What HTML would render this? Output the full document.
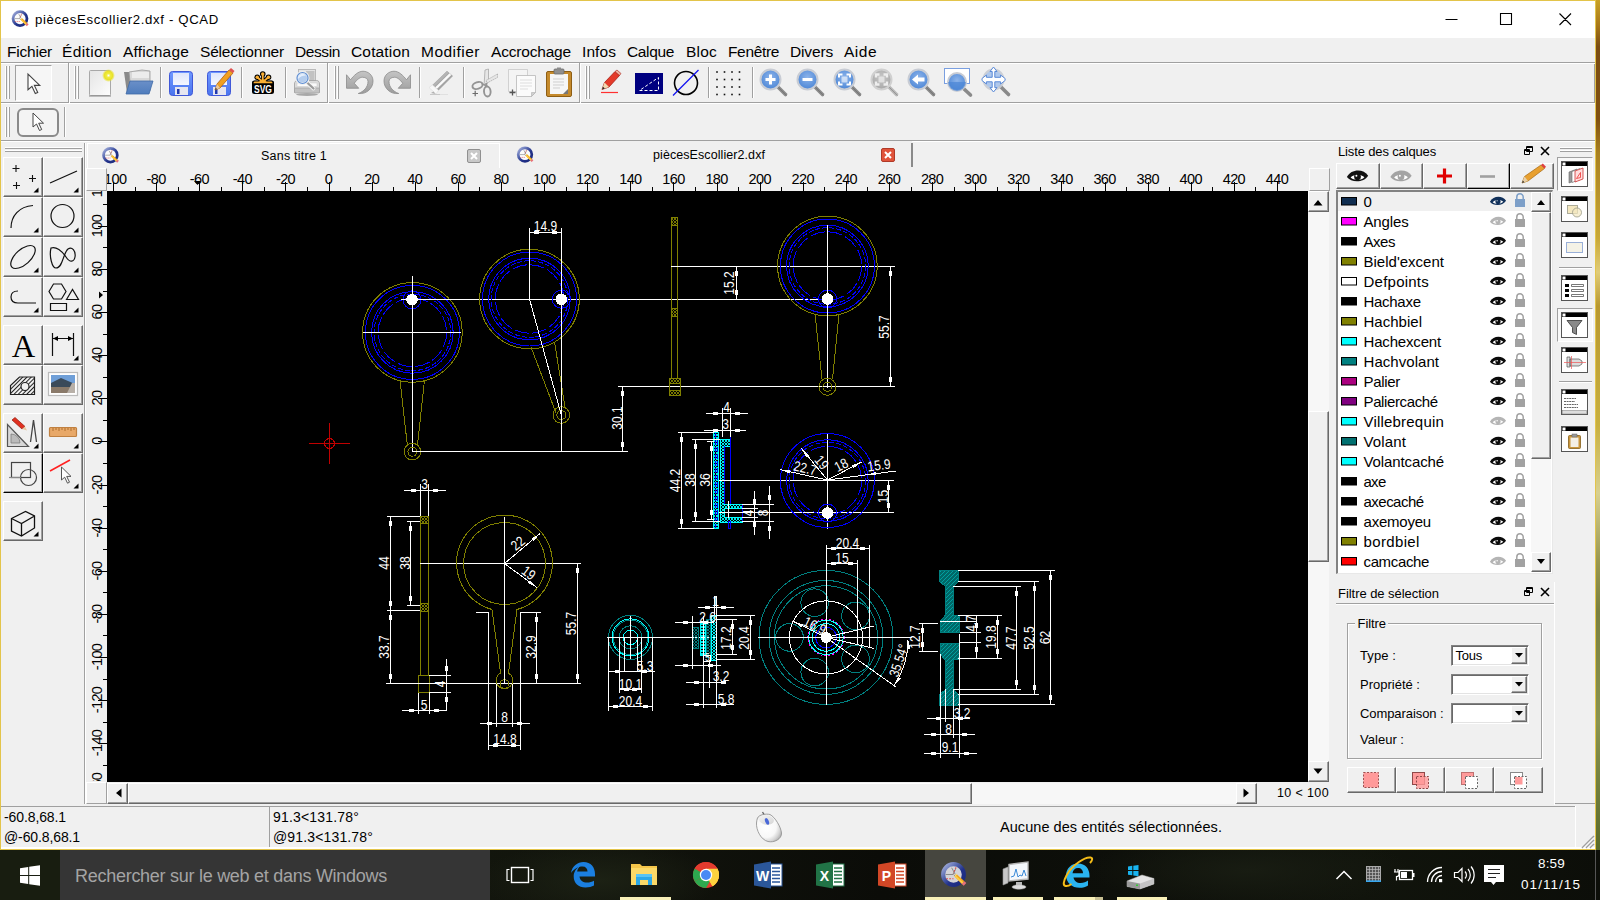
<!DOCTYPE html><html><head><meta charset="utf-8"><title>QCAD</title><style>
html,body{margin:0;padding:0;background:#000;}
#root{position:relative;width:1600px;height:900px;overflow:hidden;background:#f0f0f0;font-family:'Liberation Sans',sans-serif;}
.t{position:absolute;white-space:pre;}
.b{position:absolute;box-sizing:border-box;}
svg{position:absolute;overflow:visible;}
.btn{position:absolute;box-sizing:border-box;background:#f0f0f0;border:1px solid;border-color:#fff #696969 #696969 #fff;box-shadow:inset -1px -1px 0 #a0a0a0;}
</style></head><body><div id="root"><div class="b" style="left:0px;top:0px;width:1600px;height:900px;background:#f0f0f0;"></div><div class="b" style="left:1596px;top:0px;width:4px;height:850px;background:linear-gradient(180deg,#c9a227 0,#a87818 3%,#7b4d12 5.500%,#80500f 14%,#a88020 18%,#c8a838 28%,#e0cc78 32%,#b89830 36%,#c8b040 50%,#d8d090 58%,#9a9850 66%,#7a8040 72%,#8a9450 85%,#5a6a2a 100%);"></div><div class="b" style="left:0px;top:0px;width:1596px;height:850px;border:1px solid #e3c44a;"></div><div class="b" style="left:1px;top:1px;width:1594px;height:37px;background:#fff;"></div><div class="t" style="left:35px;top:11.5px;font-size:13.2px;line-height:16px;color:#000;letter-spacing:0.653px;">piècesEscollier2.dxf - QCAD</div><svg style="left:1440px;top:8px" width="140" height="24"><path d="M5.5 11.5h12M60.5 5.5h11v11h-11zM119.5 5.5l11.5 11.5M131 5.5l-11.5 11.5" stroke="#000" stroke-width="1.1" fill="none"/></svg><div class="t" style="left:7px;top:41.5px;font-size:15.5px;line-height:19px;color:#000;letter-spacing:-0.217px;">Fichier</div><div class="t" style="left:62px;top:41.5px;font-size:15.5px;line-height:19px;color:#000;letter-spacing:0.371px;">Édition</div><div class="t" style="left:123px;top:41.5px;font-size:15.5px;line-height:19px;color:#000;letter-spacing:0.182px;">Affichage</div><div class="t" style="left:200px;top:41.5px;font-size:15.5px;line-height:19px;color:#000;letter-spacing:-0.181px;">Sélectionner</div><div class="t" style="left:295px;top:41.5px;font-size:15.5px;line-height:19px;color:#000;letter-spacing:-0.398px;">Dessin</div><div class="t" style="left:351px;top:41.5px;font-size:15.5px;line-height:19px;color:#000;letter-spacing:0.158px;">Cotation</div><div class="t" style="left:421px;top:41.5px;font-size:15.5px;line-height:19px;color:#000;letter-spacing:0.482px;">Modifier</div><div class="t" style="left:491px;top:41.5px;font-size:15.5px;line-height:19px;color:#000;letter-spacing:-0.186px;">Accrochage</div><div class="t" style="left:582px;top:41.5px;font-size:15.5px;line-height:19px;color:#000;letter-spacing:0.078px;">Infos</div><div class="t" style="left:627px;top:41.5px;font-size:15.5px;line-height:19px;color:#000;letter-spacing:-0.354px;">Calque</div><div class="t" style="left:686px;top:41.5px;font-size:15.5px;line-height:19px;color:#000;letter-spacing:0.211px;">Bloc</div><div class="t" style="left:728px;top:41.5px;font-size:15.5px;line-height:19px;color:#000;letter-spacing:-0.346px;">Fenêtre</div><div class="t" style="left:790px;top:41.5px;font-size:15.5px;line-height:19px;color:#000;letter-spacing:-0.154px;">Divers</div><div class="t" style="left:844px;top:41.5px;font-size:15.5px;line-height:19px;color:#000;letter-spacing:0.492px;">Aide</div><div class="b" style="left:1px;top:62px;width:1594px;height:41px;border-top:1px solid #a0a0a0;border-bottom:1px solid #a0a0a0;border-right:1px solid #a0a0a0;"></div><div class="b" style="left:1px;top:63px;width:1594px;height:1px;background:#fff;"></div><div class="b" style="left:1px;top:103px;width:1594px;height:1px;background:#fff;"></div><div class="b" style="left:1px;top:140px;width:1594px;height:2px;border-top:1px solid #a0a0a0;border-bottom:1px solid #fff;"></div><div class="b" style="left:5px;top:66px;width:2px;height:33px;border-left:1px solid #fff;border-right:1px solid #a0a0a0;"></div><div class="b" style="left:8px;top:66px;width:2px;height:33px;border-left:1px solid #fff;border-right:1px solid #a0a0a0;"></div><div class="b" style="left:74px;top:66px;width:2px;height:33px;border-left:1px solid #fff;border-right:1px solid #a0a0a0;"></div><div class="b" style="left:77px;top:66px;width:2px;height:33px;border-left:1px solid #fff;border-right:1px solid #a0a0a0;"></div><div class="b" style="left:334px;top:66px;width:2px;height:33px;border-left:1px solid #fff;border-right:1px solid #a0a0a0;"></div><div class="b" style="left:337px;top:66px;width:2px;height:33px;border-left:1px solid #fff;border-right:1px solid #a0a0a0;"></div><div class="b" style="left:585px;top:66px;width:2px;height:33px;border-left:1px solid #fff;border-right:1px solid #a0a0a0;"></div><div class="b" style="left:588px;top:66px;width:2px;height:33px;border-left:1px solid #fff;border-right:1px solid #a0a0a0;"></div><div class="b" style="left:68px;top:63px;width:2px;height:40px;border-left:1px solid #a0a0a0;border-right:1px solid #fff;"></div><div class="b" style="left:327px;top:63px;width:2px;height:40px;border-left:1px solid #a0a0a0;border-right:1px solid #fff;"></div><div class="b" style="left:579px;top:63px;width:2px;height:40px;border-left:1px solid #a0a0a0;border-right:1px solid #fff;"></div><div class="b" style="left:160px;top:67px;width:2px;height:31px;border-left:1px solid #a0a0a0;border-right:1px solid #fff;"></div><div class="b" style="left:241px;top:67px;width:2px;height:31px;border-left:1px solid #a0a0a0;border-right:1px solid #fff;"></div><div class="b" style="left:285px;top:67px;width:2px;height:31px;border-left:1px solid #a0a0a0;border-right:1px solid #fff;"></div><div class="b" style="left:419px;top:67px;width:2px;height:31px;border-left:1px solid #a0a0a0;border-right:1px solid #fff;"></div><div class="b" style="left:463px;top:67px;width:2px;height:31px;border-left:1px solid #a0a0a0;border-right:1px solid #fff;"></div><div class="b" style="left:708px;top:67px;width:2px;height:31px;border-left:1px solid #a0a0a0;border-right:1px solid #fff;"></div><div class="b" style="left:752px;top:67px;width:2px;height:31px;border-left:1px solid #a0a0a0;border-right:1px solid #fff;"></div><div class="b" style="left:5px;top:107px;width:2px;height:30px;border-left:1px solid #fff;border-right:1px solid #a0a0a0;"></div><div class="b" style="left:8px;top:107px;width:2px;height:30px;border-left:1px solid #fff;border-right:1px solid #a0a0a0;"></div><div class="b" style="left:64px;top:107px;width:2px;height:30px;border-left:1px solid #a0a0a0;border-right:1px solid #fff;"></div><div class="b" style="left:15px;top:65px;width:37px;height:36px;background:#f6f6f6;border:1px solid;border-color:#a0a0a0 #fff #fff #a0a0a0;"></div><svg style="left:28px;top:74px" width="16" height="22"><g transform="scale(1.12)"><path d="M0 0v14l3.5-3 3 6.5 2.2-1-3-6.3h4.8z" fill="#fff" stroke="#444" stroke-width="1"/></g></svg><div class="b" style="left:17px;top:108px;width:42px;height:29px;border:2px solid #8a8a8a;border-radius:6px;background:#f4f4f4;"></div><svg style="left:33px;top:113px" width="14" height="20"><path d="M0 0v14l3.5-3 3 6.5 2.2-1-3-6.3h4.8z" fill="#fff" stroke="#444" stroke-width="1"/></svg><svg width="0" height="0" style="left:0;top:0"><defs>
<linearGradient id="gpg" x1="0" y1="0" x2="1" y2="1"><stop offset="0" stop-color="#e4e4e4"/><stop offset="1" stop-color="#fdfdfd"/></linearGradient>
<radialGradient id="gyl"><stop offset="0" stop-color="#fff"/><stop offset=".3" stop-color="#f0ec40"/><stop offset=".65" stop-color="#e8e12a"/><stop offset="1" stop-color="#e8e12a" stop-opacity="0"/></radialGradient>
<linearGradient id="gfl" x1="0" y1="0" x2="0" y2="1"><stop offset="0" stop-color="#6a8fc8"/><stop offset="1" stop-color="#4f7dbd"/></linearGradient>
<linearGradient id="gfd" x1="0" y1="0" x2="0" y2="1"><stop offset="0" stop-color="#6f98ff"/><stop offset="1" stop-color="#4a74ee"/></linearGradient>
<linearGradient id="glb" x1="0" y1="0" x2="0" y2="1"><stop offset="0" stop-color="#dfe6fb"/><stop offset="1" stop-color="#f4f6ff"/></linearGradient>
<radialGradient id="glens" cx=".5" cy=".4" r=".6"><stop offset="0" stop-color="#8db4ea"/><stop offset="1" stop-color="#4c86d6"/></radialGradient>
<radialGradient id="glensg" cx=".5" cy=".4" r=".6"><stop offset="0" stop-color="#c8c8c8"/><stop offset="1" stop-color="#a8a8a8"/></radialGradient>
<linearGradient id="ggr" x1="0" y1="0" x2="0" y2="1"><stop offset="0" stop-color="#c4c4c4"/><stop offset="1" stop-color="#9c9c9c"/></linearGradient>
</defs></svg><svg style="left:84px;top:66px" width="32" height="32" viewBox="0 0 32 32"><rect x="5.500" y="4.500" width="21" height="25" rx="1" fill="url(#gpg)" stroke="#a8a8a8"/><path d="M5 30h22" stroke="#888" stroke-width="1"/><circle cx="24.500" cy="9.500" r="6.500" fill="url(#gyl)"/></svg><svg style="left:122px;top:66px" width="32" height="32" viewBox="0 0 32 32"><path d="M2 6l3 21h3V6z" fill="#8a8a8a"/><path d="M7 6l13-2 8 1v20H9z" fill="#d8d8d8" stroke="#999" stroke-width=".8"/><path d="M10 6h17v6H10z" fill="#ececec"/><path d="M8 15h23l-4 13H4z" fill="url(#gfl)" stroke="#3f6aa6" stroke-width=".8"/></svg><svg style="left:165px;top:66px" width="32" height="32" viewBox="0 0 32 32"><rect x="4.500" y="5.500" width="23" height="24" rx="3" fill="url(#gfd)" stroke="#4058d8"/><rect x="8" y="7" width="16" height="12" fill="url(#glb)"/><rect x="10" y="21" width="13" height="8" fill="#e6e6f0"/><rect x="12" y="23" width="2.500" height="5" fill="#2038b0"/></svg><svg style="left:203px;top:66px" width="32" height="32" viewBox="0 0 32 32"><rect x="4.500" y="5.500" width="23" height="24" rx="3" fill="url(#gfd)" stroke="#4058d8"/><rect x="8" y="7" width="16" height="12" fill="url(#glb)"/><rect x="10" y="21" width="13" height="8" fill="#e6e6f0"/><rect x="12" y="23" width="2.500" height="5" fill="#2038b0"/><path d="M12 24l2-6L26 4l4 3L17 22z" fill="#f0a020" stroke="#b06010" stroke-width=".8"/><path d="M26 4l4 3 1.500-2-3.500-3z" fill="#e05050"/><path d="M12 24l2-6 3 4z" fill="#e8c8a0"/><path d="M12 24l.8-2.400 1.200 1.600z" fill="#333"/></svg><svg style="left:246px;top:66px" width="32" height="32" viewBox="0 0 32 32"><g stroke="#000" stroke-width="3.600" stroke-linecap="round"><path d="M16.750 16V8M16.750 16L11.250 11.250M16.750 16L22.500 11.250M16.750 16.500H8M16.750 16.500H26"/></g><circle cx="16.750" cy="8" r="2.800" fill="#000"/><circle cx="11.250" cy="11.250" r="2.800" fill="#000"/><circle cx="22.500" cy="11.250" r="2.800" fill="#000"/><rect x="6" y="14.500" width="22" height="13.500" rx="2.500" fill="#000"/><g stroke="#fbb034" stroke-width="1.800" stroke-linecap="round"><path d="M16.750 16V8M16.750 16L11.250 11.250M16.750 16L22.500 11.250"/></g><circle cx="16.750" cy="8" r="1.700" fill="#fbb034"/><circle cx="11.250" cy="11.250" r="1.700" fill="#fbb034"/><circle cx="22.500" cy="11.250" r="1.700" fill="#fbb034"/><path d="M7.500 17.200c0-1.200.6-1.700 1.700-1.700h15.600c1.100 0 1.700.5 1.700 1.700z" fill="#fbb034"/><path d="M12 16.500l4.750-3.500 4.750 3.500z" fill="#fbb034"/><text x="17" y="26.800" font-family="'Liberation Sans',sans-serif" font-weight="700" font-size="11" fill="#fff" text-anchor="middle" textLength="18" lengthAdjust="spacingAndGlyphs">SVG</text></svg><svg style="left:291px;top:66px" width="32" height="32" viewBox="0 0 32 32"><rect x="7.500" y="3.500" width="17" height="13" fill="#e4e4e4" stroke="#b4b4b4" stroke-width=".9"/><rect x="15" y="5" width="8.500" height="10" fill="#c2c2c2"/><path d="M3.500 18c0-2 1-3.500 3-3.500h19c2 0 3 1.500 3 3.500v8.500h-25z" fill="#dcdcdc" stroke="#a4a4a4" stroke-width=".9"/><rect x="6" y="17" width="20" height="3.500" fill="#fafafa" stroke="#c8c8c8" stroke-width=".5"/><rect x="3.500" y="22" width="25" height="5" rx="1" fill="#c2c2c2" stroke="#a0a0a0" stroke-width=".7"/><ellipse cx="16" cy="28.500" rx="11" ry="1.500" fill="#a8a8a8"/><path d="M15.500 16l7 6.500" stroke="#f4f4f4" stroke-width="3.800" stroke-linecap="round"/><path d="M15.500 16l7 6.500" stroke="#9a9a9a" stroke-width="2.200" stroke-linecap="round"/><circle cx="11.500" cy="12" r="5.800" fill="#b4cdee" stroke="#f0f0f0" stroke-width="2.400"/><circle cx="11.500" cy="12" r="5.500" fill="none" stroke="#5f8fd4" stroke-width="1.200"/><path d="M7 13a4.500 4.500 0 0 1 8-3.500c-3 0-6 1-8 3.500z" fill="#e4eefc"/></svg><svg style="left:344px;top:66px" width="32" height="32" viewBox="0 0 32 32"><path d="M2.500 8.750V22.250H14.750L10.250 17.250C13 13.500 16 11.250 18.500 11.250C22 11.250 24 13 24 15.500C24 21 20 25.500 14.250 27.500C23 28.500 29 22 29 15C29 9 24 5.250 19 5.250C14 5.250 10 9.500 6.500 13.750Z" fill="url(#ggr)" stroke="#8c8c8c" stroke-width=".8"/></svg><svg style="left:381px;top:66px" width="32" height="32" viewBox="0 0 32 32"><g transform="translate(32,0) scale(-1,1)"><path d="M2.500 8.750V22.250H14.750L10.250 17.250C13 13.500 16 11.250 18.500 11.250C22 11.250 24 13 24 15.500C24 21 20 25.500 14.250 27.500C23 28.500 29 22 29 15C29 9 24 5.250 19 5.250C14 5.250 10 9.500 6.500 13.750Z" fill="url(#ggr)" stroke="#8c8c8c" stroke-width=".8"/></g></svg><svg style="left:425px;top:66px" width="32" height="32" viewBox="0 0 32 32"><path d="M7.500 19L22 5l6 5L13.500 24.500z" fill="#a4a4a4"/><path d="M10 21.500L24.500 7.300l1.800 1.600L11.800 23z" fill="#fafafa"/><path d="M7.500 19L22 5l2 1.700L9.300 20.700z" fill="#b4b4b4"/><path d="M7.500 19l6 5.500L11 28l-7-6.500z" fill="#f8f8f8" stroke="#dcdcdc" stroke-width=".6"/><path d="M6 27l2.500-1.500 2 2.500z" fill="#b0b0b0"/><path d="M5 28.500h10" stroke="#c8c8c8" stroke-width="1"/><path d="M15 28.500h8" stroke="#e0e0e0" stroke-width="1"/></svg><svg style="left:468px;top:66px" width="32" height="32" viewBox="0 0 32 32"><path d="M17 4l3.500-1v13l-2.800 3.500-1.500-2z" fill="#e6e6e6" stroke="#a8a8a8" stroke-width=".8"/><path d="M29.500 8v3.500L19 17l-1-2.500z" fill="#e6e6e6" stroke="#a8a8a8" stroke-width=".8" stroke-dasharray="1.500 .8"/><ellipse cx="9.500" cy="19.500" rx="5.200" ry="3.200" transform="rotate(-18 9.500 19.500)" fill="none" stroke="#949494" stroke-width="1.900"/><ellipse cx="19.300" cy="25.500" rx="3.300" ry="5" transform="rotate(-5 19.300 25.500)" fill="none" stroke="#949494" stroke-width="1.900"/><path d="M14 18l4 1.500M18 17l1 4" stroke="#949494" stroke-width="1.800"/><path d="M4.500 27.500h5.500M7.200 24.800v5.500" stroke="#6c6c6c" stroke-width="1.200"/></svg><svg style="left:506px;top:66px" width="32" height="32" viewBox="0 0 32 32"><path d="M2.500 3.500h19v22h-19z" fill="#f4f4f4" stroke="#c8c8c8" stroke-width=".8"/><path d="M10.500 9.500h19v17l-4 4h-15z" fill="#fbfbfb" stroke="#b8b8b8" stroke-width=".8"/><path d="M25.500 30.500v-4h4z" fill="#d0d0d0" stroke="#b0b0b0" stroke-width=".6"/><path d="M14 14h12M14 17h12M14 20h12M14 23h8" stroke="#ddd" stroke-width="1"/><path d="M3.500 26.500h6M6.500 23.500v6" stroke="#555" stroke-width="1.300"/></svg><svg style="left:543px;top:66px" width="32" height="32" viewBox="0 0 32 32"><rect x="3.500" y="5.500" width="25" height="25" rx="1.500" fill="#c58a2c" stroke="#8e5e14"/><path d="M7 8h18v20H7z" fill="#f6f6f6"/><path d="M10 13h11M10 16h11M10 19h11M10 22h7" stroke="#cfcfcf" stroke-width="1"/><path d="M20 28l5-5v5z" fill="#777"/><rect x="11" y="3" width="10" height="5" rx="1" fill="#909090" stroke="#6a6a6a" stroke-width=".8"/><rect x="14" y="1.500" width="4" height="3" fill="#8a8a8a"/></svg><svg style="left:596px;top:66px" width="32" height="32" viewBox="0 0 32 32"><path d="M6 23.500l2.500-7L19 5.500l4.500 4L13 21z" fill="#e43a2a" stroke="#a82016" stroke-width=".8"/><path d="M19 5.500l4.500 4 1.500-2-4-3.500z" fill="#f0b0a0" stroke="#a82016" stroke-width=".6"/><path d="M6 23.500l2.500-7L13 21z" fill="#f0d8b0"/><path d="M6 23.500l1-2.800 1.800 1.700z" fill="#222"/><path d="M5 26.500h17" stroke="#ff3030" stroke-width="1.200"/></svg><svg style="left:633px;top:66px" width="32" height="32" viewBox="0 0 32 32"><rect x="2" y="7" width="28" height="21" fill="#000080"/><path d="M6.500 24.500h19v-13z" fill="none" stroke="#fff" stroke-width="1" stroke-dasharray="3 2"/></svg><svg style="left:669px;top:66px" width="32" height="32" viewBox="0 0 32 32"><circle cx="17" cy="17" r="11.500" fill="none" stroke="#000" stroke-width="1.600"/><path d="M4 29.500L29.500 4" stroke="#1010f0" stroke-width="1.300"/></svg><svg style="left:714px;top:66px" width="32" height="32" viewBox="0 0 32 32"><g fill="#111"><rect x="2.2" y="5.2" width="1.600" height="1.600"/><rect x="2.2" y="12.7" width="1.600" height="1.600"/><rect x="2.2" y="20.2" width="1.600" height="1.600"/><rect x="2.2" y="27.7" width="1.600" height="1.600"/><rect x="9.7" y="5.2" width="1.600" height="1.600"/><rect x="9.7" y="12.7" width="1.600" height="1.600"/><rect x="9.7" y="20.2" width="1.600" height="1.600"/><rect x="9.7" y="27.7" width="1.600" height="1.600"/><rect x="17.2" y="5.2" width="1.600" height="1.600"/><rect x="17.2" y="12.7" width="1.600" height="1.600"/><rect x="17.2" y="20.2" width="1.600" height="1.600"/><rect x="17.2" y="27.7" width="1.600" height="1.600"/><rect x="24.7" y="5.2" width="1.600" height="1.600"/><rect x="24.7" y="12.7" width="1.600" height="1.600"/><rect x="24.7" y="20.2" width="1.600" height="1.600"/><rect x="24.7" y="27.7" width="1.600" height="1.600"/></g></svg><svg style="left:756px;top:66px" width="32" height="32" viewBox="0 0 32 32"><path d="M21.500 20.500l8 8" stroke="#8a8a8a" stroke-width="3.600" stroke-linecap="round"/><path d="M21.500 20.500l8 8" stroke="#555" stroke-width="1" stroke-linecap="round" opacity=".35" transform="translate(.8,.8)"/><circle cx="14.5" cy="13.5" r="10" fill="url(#glens)" stroke="#c8ccd4" stroke-width="2"/><path d="M9.500 13.500h10M14.500 8.500v10" stroke="#fff" stroke-width="3"/></svg><svg style="left:793px;top:66px" width="32" height="32" viewBox="0 0 32 32"><path d="M21.500 20.500l8 8" stroke="#8a8a8a" stroke-width="3.600" stroke-linecap="round"/><path d="M21.500 20.500l8 8" stroke="#555" stroke-width="1" stroke-linecap="round" opacity=".35" transform="translate(.8,.8)"/><circle cx="14.5" cy="13.5" r="10" fill="url(#glens)" stroke="#c8ccd4" stroke-width="2"/><path d="M9.500 13.500h10" stroke="#fff" stroke-width="3"/></svg><svg style="left:830px;top:66px" width="32" height="32" viewBox="0 0 32 32"><path d="M21.500 20.500l8 8" stroke="#8a8a8a" stroke-width="3.600" stroke-linecap="round"/><path d="M21.500 20.500l8 8" stroke="#555" stroke-width="1" stroke-linecap="round" opacity=".35" transform="translate(.8,.8)"/><circle cx="14.5" cy="13.5" r="10" fill="url(#glens)" stroke="#c8ccd4" stroke-width="2"/><path d="M9 11.500V8.500h3.500M16.500 8.500H20v3M20 15.500v3h-3.500M12.500 18.500H9v-3" stroke="#fff" stroke-width="2" fill="none"/><rect x="11.500" y="10.500" width="6" height="6" fill="#fff" opacity=".6"/></svg><svg style="left:867px;top:66px" width="32" height="32" viewBox="0 0 32 32"><path d="M21.500 20.500l8 8" stroke="#b8b8b8" stroke-width="3.600" stroke-linecap="round"/><path d="M21.500 20.500l8 8" stroke="#555" stroke-width="1" stroke-linecap="round" opacity=".35" transform="translate(.8,.8)"/><circle cx="14.5" cy="13.5" r="10" fill="url(#glensg)" stroke="#d0d0d0" stroke-width="2"/><path d="M9 11.500V8.500h3.500M16.500 8.500H20v3M20 15.500v3h-3.500M12.500 18.500H9v-3" stroke="#eee" stroke-width="2.400" fill="none"/><rect x="11.500" y="10.500" width="6" height="6" fill="#e8e8e8" opacity=".8"/></svg><svg style="left:904px;top:66px" width="32" height="32" viewBox="0 0 32 32"><path d="M21.500 20.500l8 8" stroke="#8a8a8a" stroke-width="3.600" stroke-linecap="round"/><path d="M21.500 20.500l8 8" stroke="#555" stroke-width="1" stroke-linecap="round" opacity=".35" transform="translate(.8,.8)"/><circle cx="14.5" cy="13.5" r="10" fill="url(#glens)" stroke="#c8ccd4" stroke-width="2"/><path d="M8 13.500l6-5v3h6.500v4H14v3z" fill="#fff"/></svg><svg style="left:941px;top:66px" width="32" height="32" viewBox="0 0 32 32"><rect x="3.500" y="2.500" width="25" height="15" fill="#fff" stroke="#7a9fe0" stroke-width="1"/><path d="M22 22l7.500 7" stroke="#8a8a8a" stroke-width="3.600" stroke-linecap="round"/><circle cx="16" cy="16" r="9" fill="url(#glens)" stroke="#c8ccd4" stroke-width="2"/><path d="M7 16a9 9 0 0 0 18 0z" fill="#4c86d6" opacity=".7"/></svg><svg style="left:979px;top:66px" width="32" height="32" viewBox="0 0 32 32"><path d="M21.500 20.500l8 8" stroke="#8a8a8a" stroke-width="3.600" stroke-linecap="round"/><circle cx="14.500" cy="13.500" r="10" fill="#a9c4ec" stroke="#c8ccd4" stroke-width="2" opacity=".9"/><path d="M14.500 1l3.500 4.500h-2.200v5.800h5.800V9l4.500 3.500v2L21.600 18v-2.200h-5.800v5.800H18L14.500 26 11 21.600h2.200v-5.800H7.400V18L3 14.500v-2L7.400 9v2.300h5.800V5.500H11z" fill="#fff" stroke="#5a8ad8" stroke-width="1"/></svg><div class="b" style="left:84px;top:143px;width:2px;height:661px;border-left:1px solid #a0a0a0;border-right:1px solid #fff;"></div><div class="b" style="left:5px;top:147px;width:77px;height:2px;border-top:1px solid #fff;border-bottom:1px solid #a0a0a0;"></div><div class="b" style="left:5px;top:150px;width:77px;height:2px;border-top:1px solid #fff;border-bottom:1px solid #a0a0a0;"></div><div class="btn" style="left:3px;top:157px;width:40px;height:40px;"></div><div class="btn" style="left:43px;top:157px;width:40px;height:40px"></div><div class="btn" style="left:3px;top:197px;width:40px;height:40px;"></div><div class="btn" style="left:43px;top:197px;width:40px;height:40px"></div><div class="btn" style="left:3px;top:237px;width:40px;height:40px;"></div><div class="btn" style="left:43px;top:237px;width:40px;height:40px"></div><div class="btn" style="left:3px;top:277px;width:40px;height:40px;"></div><div class="btn" style="left:43px;top:277px;width:40px;height:40px"></div><div class="btn" style="left:3px;top:325px;width:40px;height:40px;"></div><div class="btn" style="left:43px;top:325px;width:40px;height:40px"></div><div class="btn" style="left:3px;top:365px;width:40px;height:40px;"></div><div class="btn" style="left:43px;top:365px;width:40px;height:40px"></div><div class="btn" style="left:3px;top:413px;width:40px;height:40px;"></div><div class="btn" style="left:43px;top:413px;width:40px;height:40px"></div><div class="btn" style="left:3px;top:453px;width:40px;height:40px;border-color:#fff #000 #000 #fff;"></div><div class="btn" style="left:43px;top:453px;width:40px;height:40px"></div><div class="btn" style="left:3px;top:501px;width:40px;height:40px;"></div><svg style="left:3px;top:157px" width="40" height="40" fill="none" stroke="#111" stroke-width="1.200"><path d="M9.500 11.500h7M13 8v7M26 21.500h7M29.500 18v7M10 28.500h7M13.500 25v7" stroke-width="1.100"/><path stroke="none" d="M35.500 30.500v5h-5z" fill="#000"/></svg><svg style="left:43px;top:157px" width="40" height="40" fill="none" stroke="#111" stroke-width="1.200"><path d="M7 26L34 14"/><path stroke="none" d="M35.500 30.500v5h-5z" fill="#000"/></svg><svg style="left:3px;top:197px" width="40" height="40" fill="none" stroke="#111" stroke-width="1.200"><path d="M8 31C8 19 16 9.500 30 8.500"/><path stroke="none" d="M35.500 30.500v5h-5z" fill="#000"/></svg><svg style="left:43px;top:197px" width="40" height="40" fill="none" stroke="#111" stroke-width="1.200"><circle cx="19.500" cy="19" r="11.500"/><path stroke="none" d="M35.500 30.500v5h-5z" fill="#000"/></svg><svg style="left:3px;top:237px" width="40" height="40" fill="none" stroke="#111" stroke-width="1.200"><ellipse cx="20" cy="20" rx="15" ry="7.500" transform="rotate(-42 20 20)"/><path stroke="none" d="M35.500 30.500v5h-5z" fill="#000"/></svg><svg style="left:43px;top:237px" width="40" height="40" fill="none" stroke="#111" stroke-width="1.200"><path d="M8 11c5-2 11 3 15 9 4 6 8 5 9 0 1-6-3-11-7-8-5 4-5 19-12 19-4 0-7-12-5-20z"/><path stroke="none" d="M35.500 30.500v5h-5z" fill="#000"/></svg><svg style="left:3px;top:277px" width="40" height="40" fill="none" stroke="#111" stroke-width="1.200"><path d="M33 26H15c-4 0-7-2-7-6s3-6 7-6"/><path stroke="none" d="M35.500 30.500v5h-5z" fill="#000"/></svg><svg style="left:43px;top:277px" width="40" height="40" fill="none" stroke="#111" stroke-width="1.200"><path d="M6 14.500l4.500-7.500h8l4.500 7.500-4.500 7.500h-8zM23.500 22.500l6-10 6 10zM7.500 26.500h16v7h-16z"/><path stroke="none" d="M35.500 30.500v5h-5z" fill="#000"/></svg><svg style="left:3px;top:325px" width="40" height="40" fill="none" stroke="#111" stroke-width="1.200"><text x="20.500" y="31.700" font-family="'Liberation Serif',serif" font-size="32.500" fill="#000" stroke="none" text-anchor="middle">A</text></svg><svg style="left:43px;top:325px" width="40" height="40" fill="none" stroke="#111" stroke-width="1.200"><path d="M9.500 8v23M30.500 8v23M10 13.500h20"/><path d="M10 13.500l5-2.500v5zM30 13.500l-5-2.500v5z" fill="#000" stroke="none"/><path stroke="none" d="M35.500 30.500v5h-5z" fill="#000"/></svg><svg style="left:3px;top:365px" width="40" height="40" fill="none" stroke="#111" stroke-width="1.200"><defs><pattern id="lh" width="3" height="3" patternUnits="userSpaceOnUse" patternTransform="rotate(45)"><path d="M1.500 0v3" stroke="#222" stroke-width="1"/></pattern></defs><path d="M7.500 29.500v-9l9-8.500h15v17.500z" fill="url(#lh)" stroke="#222"/><circle cx="22" cy="21.500" r="4" fill="#f0f0f0" stroke="#222"/></svg><svg style="left:43px;top:365px" width="40" height="40" fill="none" stroke="#111" stroke-width="1.200"><rect x="5.500" y="7.500" width="29" height="23" fill="#fff" stroke="#bbb"/><rect x="8" y="10" width="24" height="8" fill="#6f9fd8" stroke="none"/><rect x="8" y="18" width="24" height="10" fill="#8a7a6a" stroke="none"/><path d="M8 18l10-5 14 6v3H8z" fill="#3a4a5a" stroke="none"/><path d="M24 28l5-10h3v10z" fill="#b8b0a8" stroke="none"/></svg><svg style="left:3px;top:413px" width="40" height="40" fill="none" stroke="#111" stroke-width="1.200"><path d="M4.500 33.500v-22l21 22z" fill="#d8d8d8" stroke="#555"/><path d="M8 30v-9a9 9 0 0 1 9 9z" fill="#bbb" stroke="#777" stroke-width=".7"/><path d="M9 7l3-2.500 10 9-3 2.500z" fill="#e03020" stroke="#901808" stroke-width=".7"/><path d="M22 13.500l2 4-5-1.500z" fill="#e8c8a0" stroke="none"/><path d="M30.500 7l-3 22M30.500 7l3 22" stroke="#444" stroke-width="1.300"/><path stroke="none" d="M35.500 30.500v5h-5z" fill="#000"/></svg><svg style="left:43px;top:413px" width="40" height="40" fill="none" stroke="#111" stroke-width="1.200"><rect x="6.500" y="14.500" width="27" height="9" rx="1" fill="#e8a868" stroke="#c08040"/><path d="M10 15v3M13 15v2M16 15v3M19 15v2M22 15v3M25 15v2M28 15v3M31 15v2" stroke="#a06020" stroke-width=".8"/><path stroke="none" d="M35.500 30.500v5h-5z" fill="#000"/></svg><svg style="left:3px;top:453px" width="40" height="40" fill="none" stroke="#111" stroke-width="1.200"><rect x="8.500" y="9.500" width="19" height="15" stroke="#444"/><circle cx="25.500" cy="24.500" r="8" stroke="#444"/><path d="M6 24.500h12" stroke="#888"/></svg><svg style="left:43px;top:453px" width="40" height="40" fill="none" stroke="#111" stroke-width="1.200"><path d="M7 18L27 7" stroke="#ff2020" stroke-width="1.500"/><path d="M18.500 14v13l3.200-2.800 2.800 6 2-1-2.800-5.800h4.300z" fill="#fff" stroke="#555" stroke-width="1"/><path stroke="none" d="M35.500 30.500v5h-5z" fill="#000"/></svg><svg style="left:3px;top:501px" width="40" height="40" fill="none" stroke="#111" stroke-width="1.200"><path d="M8.500 17.500l14-7 9 4.500v12l-13 8-10-5zM8.500 17.500l10 5 13-7.500M18.500 22.500v12.500" stroke-width="1.300"/><path stroke="none" d="M35.500 30.500v5h-5z" fill="#000"/></svg><div class="b" style="left:87px;top:143px;width:413px;height:25px;background:#f0f0f0;border:1px solid #fff;border-bottom:none;"></div><div class="b" style="left:500px;top:141px;width:412px;height:27px;background:#f0f0f0;"></div><div class="b" style="left:911px;top:143px;width:2px;height:24px;background:#8a8a8a;"></div><div class="t" style="left:261px;top:149.0px;font-size:12.5px;line-height:15px;color:#000;letter-spacing:0.230px;">Sans titre 1</div><div class="t" style="left:653px;top:148.0px;font-size:12.5px;line-height:15px;color:#000;letter-spacing:0.077px;">piècesEscollier2.dxf</div><div class="b" style="left:467px;top:149px;width:14px;height:14px;background:#c8c8c8;border:1px solid #909090;border-radius:2px;"></div><svg style="left:470px;top:152px" width="8" height="8"><path d="M1 1l6 6M7 1l-6 6" stroke="#fff" stroke-width="2"/></svg><div class="b" style="left:881px;top:148px;width:14px;height:14px;background:#e0533a;border:1px solid #b03a28;border-radius:2px;"></div><svg style="left:884px;top:151px" width="8" height="8"><path d="M1 1l6 6M7 1l-6 6" stroke="#fff" stroke-width="2"/></svg><svg style="left:0;top:0" width="1600" height="900"><defs><linearGradient id="gq" x1="0" y1="0" x2="1" y2="1"><stop offset="0" stop-color="#aab4de"/><stop offset=".35" stop-color="#5466ae"/><stop offset=".6" stop-color="#22328a"/><stop offset="1" stop-color="#1c2a7a"/></linearGradient></defs><g transform="translate(20,18.6) scale(0.82)"><circle cx="0" cy="0" r="8.500" fill="#fbfbfb" stroke="url(#gq)" stroke-width="3.400"/><path d="M-6.500 0h6.500M-1.500 -5.500l3 5.500M2 -5l-2.500 5" stroke="#888" stroke-width=".8"/><path d="M-6 3.500h6M2 -6l-2 5" stroke="#e04848" stroke-width=".8" stroke-dasharray="1.500 1"/><g transform="translate(.5 1.200) scale(.82 .84) translate(-.5 -1.200)"><path d="M.5 1.200l2.200-2.200 8 7.300-2.600 2.700z" fill="#f5a81c"/><path d="M.5 1.200l2.200-2.200 .8.700-2.400 2.300z" fill="#f6e08a"/><path d="M1.300 1.900l1.100-1 7.600 7-1 1.100z" fill="#fbd24a"/><path d="M8.100 9l2.600-2.700 2 1.800-2.600 2.700z" fill="#e8707a"/><path d="M.5 1.200l.9-.9-.1 1z" fill="#444"/></g></g><g transform="translate(110.4,155.2) scale(0.81)"><circle cx="0" cy="0" r="8.500" fill="#fbfbfb" stroke="url(#gq)" stroke-width="3.400"/><path d="M-6.500 0h6.500M-1.500 -5.500l3 5.500M2 -5l-2.500 5" stroke="#888" stroke-width=".8"/><path d="M-6 3.500h6M2 -6l-2 5" stroke="#e04848" stroke-width=".8" stroke-dasharray="1.500 1"/><g transform="translate(.5 1.200) scale(.82 .84) translate(-.5 -1.200)"><path d="M.5 1.200l2.200-2.200 8 7.300-2.600 2.700z" fill="#f5a81c"/><path d="M.5 1.200l2.200-2.200 .8.700-2.400 2.300z" fill="#f6e08a"/><path d="M1.300 1.900l1.100-1 7.600 7-1 1.100z" fill="#fbd24a"/><path d="M8.100 9l2.600-2.700 2 1.800-2.600 2.700z" fill="#e8707a"/><path d="M.5 1.200l.9-.9-.1 1z" fill="#444"/></g></g><g transform="translate(525,154.6) scale(0.8)"><circle cx="0" cy="0" r="8.500" fill="#fbfbfb" stroke="url(#gq)" stroke-width="3.400"/><path d="M-6.500 0h6.500M-1.500 -5.500l3 5.500M2 -5l-2.500 5" stroke="#888" stroke-width=".8"/><path d="M-6 3.500h6M2 -6l-2 5" stroke="#e04848" stroke-width=".8" stroke-dasharray="1.500 1"/><g transform="translate(.5 1.200) scale(.82 .84) translate(-.5 -1.200)"><path d="M.5 1.200l2.200-2.200 8 7.300-2.600 2.700z" fill="#f5a81c"/><path d="M.5 1.200l2.200-2.200 .8.700-2.400 2.300z" fill="#f6e08a"/><path d="M1.300 1.900l1.100-1 7.600 7-1 1.100z" fill="#fbd24a"/><path d="M8.100 9l2.600-2.700 2 1.800-2.600 2.700z" fill="#e8707a"/><path d="M.5 1.200l.9-.9-.1 1z" fill="#444"/></g></g></svg><div class="b" style="left:86px;top:168px;width:1244px;height:23px;background:#f0f0f0;"></div><div class="b" style="left:86px;top:168px;width:21px;height:23px;border:1px solid;border-color:#fff #a0a0a0 #a0a0a0 #fff;"></div><div class="b" style="left:1309px;top:168px;width:21px;height:23px;border:1px solid;border-color:#fff #a0a0a0 #a0a0a0 #fff;"></div><svg style="left:0;top:0" width="1600" height="900"><path d="M113.5 182v9 M135.5 187v4 M156.5 182v9 M178.5 187v4 M199.5 182v9 M221.5 187v4 M242.5 182v9 M264.5 187v4 M285.5 182v9 M307.5 187v4 M329.5 182v9 M350.5 187v4 M372.5 182v9 M393.5 187v4 M415.5 182v9 M436.5 187v4 M458.5 182v9 M479.5 187v4 M501.5 182v9 M523.5 187v4 M544.5 182v9 M566.5 187v4 M587.5 182v9 M609.5 187v4 M630.5 182v9 M652.5 187v4 M673.5 182v9 M695.5 187v4 M717.5 182v9 M738.5 187v4 M760.5 182v9 M781.5 187v4 M803.5 182v9 M824.5 187v4 M846.5 182v9 M867.5 187v4 M889.5 182v9 M911.5 187v4 M932.5 182v9 M954.5 187v4 M975.5 182v9 M997.5 187v4 M1018.5 182v9 M1040.5 187v4 M1061.5 182v9 M1083.5 187v4 M1105.5 182v9 M1126.5 187v4 M1148.5 182v9 M1169.5 187v4 M1191.5 182v9 M1212.5 187v4 M1234.5 182v9 M1255.5 187v4 M1277.5 182v9 M103 204.5h4 M98 226.5h9 M103 247.5h4 M98 269.5h9 M103 291.5h4 M98 312.5h9 M103 334.5h4 M98 355.5h9 M103 377.5h4 M98 398.5h9 M103 420.5h4 M98 441.5h9 M103 463.5h4 M98 485.5h9 M103 506.5h4 M98 528.5h9 M103 549.5h4 M98 571.5h9 M103 592.5h4 M98 614.5h9 M103 635.5h4 M98 657.5h9 M103 679.5h4 M98 700.5h9 M103 722.5h4 M98 743.5h9 M103 765.5h4" stroke="#000" stroke-width="1" fill="none"/><path d="M194 181h7l-3.500 4zM99 291.500v7l4-3.500z" fill="#000"/></svg><div class="b" style="left:107px;top:168px;width:1200px;height:23px;overflow:hidden"><div class="t" style="left:-23.9px;width:60px;text-align:center;top:2px;font-size:14.5px;line-height:18px;letter-spacing:-0.6px">-100</div><div class="t" style="left:19.2px;width:60px;text-align:center;top:2px;font-size:14.5px;line-height:18px;letter-spacing:-0.6px">-80</div><div class="t" style="left:62.3px;width:60px;text-align:center;top:2px;font-size:14.5px;line-height:18px;letter-spacing:-0.6px">-60</div><div class="t" style="left:105.4px;width:60px;text-align:center;top:2px;font-size:14.5px;line-height:18px;letter-spacing:-0.6px">-40</div><div class="t" style="left:148.5px;width:60px;text-align:center;top:2px;font-size:14.5px;line-height:18px;letter-spacing:-0.6px">-20</div><div class="t" style="left:191.6px;width:60px;text-align:center;top:2px;font-size:14.5px;line-height:18px;letter-spacing:-0.6px">0</div><div class="t" style="left:234.7px;width:60px;text-align:center;top:2px;font-size:14.5px;line-height:18px;letter-spacing:-0.6px">20</div><div class="t" style="left:277.8px;width:60px;text-align:center;top:2px;font-size:14.5px;line-height:18px;letter-spacing:-0.6px">40</div><div class="t" style="left:320.9px;width:60px;text-align:center;top:2px;font-size:14.5px;line-height:18px;letter-spacing:-0.6px">60</div><div class="t" style="left:364.0px;width:60px;text-align:center;top:2px;font-size:14.5px;line-height:18px;letter-spacing:-0.6px">80</div><div class="t" style="left:407.2px;width:60px;text-align:center;top:2px;font-size:14.5px;line-height:18px;letter-spacing:-0.6px">100</div><div class="t" style="left:450.3px;width:60px;text-align:center;top:2px;font-size:14.5px;line-height:18px;letter-spacing:-0.6px">120</div><div class="t" style="left:493.4px;width:60px;text-align:center;top:2px;font-size:14.5px;line-height:18px;letter-spacing:-0.6px">140</div><div class="t" style="left:536.5px;width:60px;text-align:center;top:2px;font-size:14.5px;line-height:18px;letter-spacing:-0.6px">160</div><div class="t" style="left:579.6px;width:60px;text-align:center;top:2px;font-size:14.5px;line-height:18px;letter-spacing:-0.6px">180</div><div class="t" style="left:622.7px;width:60px;text-align:center;top:2px;font-size:14.5px;line-height:18px;letter-spacing:-0.6px">200</div><div class="t" style="left:665.8px;width:60px;text-align:center;top:2px;font-size:14.5px;line-height:18px;letter-spacing:-0.6px">220</div><div class="t" style="left:708.9px;width:60px;text-align:center;top:2px;font-size:14.5px;line-height:18px;letter-spacing:-0.6px">240</div><div class="t" style="left:752.0px;width:60px;text-align:center;top:2px;font-size:14.5px;line-height:18px;letter-spacing:-0.6px">260</div><div class="t" style="left:795.1px;width:60px;text-align:center;top:2px;font-size:14.5px;line-height:18px;letter-spacing:-0.6px">280</div><div class="t" style="left:838.2px;width:60px;text-align:center;top:2px;font-size:14.5px;line-height:18px;letter-spacing:-0.6px">300</div><div class="t" style="left:881.4px;width:60px;text-align:center;top:2px;font-size:14.5px;line-height:18px;letter-spacing:-0.6px">320</div><div class="t" style="left:924.5px;width:60px;text-align:center;top:2px;font-size:14.5px;line-height:18px;letter-spacing:-0.6px">340</div><div class="t" style="left:967.6px;width:60px;text-align:center;top:2px;font-size:14.5px;line-height:18px;letter-spacing:-0.6px">360</div><div class="t" style="left:1010.7px;width:60px;text-align:center;top:2px;font-size:14.5px;line-height:18px;letter-spacing:-0.6px">380</div><div class="t" style="left:1053.8px;width:60px;text-align:center;top:2px;font-size:14.5px;line-height:18px;letter-spacing:-0.6px">400</div><div class="t" style="left:1096.9px;width:60px;text-align:center;top:2px;font-size:14.5px;line-height:18px;letter-spacing:-0.6px">420</div><div class="t" style="left:1140.0px;width:60px;text-align:center;top:2px;font-size:14.5px;line-height:18px;letter-spacing:-0.6px">440</div></div><div class="b" style="left:86px;top:191px;width:21px;height:590px;overflow:hidden"><div class="t" style="left:-19px;width:60px;text-align:center;top:-13.8px;font-size:14.5px;line-height:18px;letter-spacing:-0.6px;transform:rotate(-90deg)">120</div><div class="t" style="left:-19px;width:60px;text-align:center;top:25.8px;font-size:14.5px;line-height:18px;letter-spacing:-0.6px;transform:rotate(-90deg)">100</div><div class="t" style="left:-19px;width:60px;text-align:center;top:69.0px;font-size:14.5px;line-height:18px;letter-spacing:-0.6px;transform:rotate(-90deg)">80</div><div class="t" style="left:-19px;width:60px;text-align:center;top:112.1px;font-size:14.5px;line-height:18px;letter-spacing:-0.6px;transform:rotate(-90deg)">60</div><div class="t" style="left:-19px;width:60px;text-align:center;top:155.2px;font-size:14.5px;line-height:18px;letter-spacing:-0.6px;transform:rotate(-90deg)">40</div><div class="t" style="left:-19px;width:60px;text-align:center;top:198.3px;font-size:14.5px;line-height:18px;letter-spacing:-0.6px;transform:rotate(-90deg)">20</div><div class="t" style="left:-19px;width:60px;text-align:center;top:241.4px;font-size:14.5px;line-height:18px;letter-spacing:-0.6px;transform:rotate(-90deg)">0</div><div class="t" style="left:-19px;width:60px;text-align:center;top:284.5px;font-size:14.5px;line-height:18px;letter-spacing:-0.6px;transform:rotate(-90deg)">-20</div><div class="t" style="left:-19px;width:60px;text-align:center;top:327.6px;font-size:14.5px;line-height:18px;letter-spacing:-0.6px;transform:rotate(-90deg)">-40</div><div class="t" style="left:-19px;width:60px;text-align:center;top:370.7px;font-size:14.5px;line-height:18px;letter-spacing:-0.6px;transform:rotate(-90deg)">-60</div><div class="t" style="left:-19px;width:60px;text-align:center;top:413.8px;font-size:14.5px;line-height:18px;letter-spacing:-0.6px;transform:rotate(-90deg)">-80</div><div class="t" style="left:-19px;width:60px;text-align:center;top:457.0px;font-size:14.5px;line-height:18px;letter-spacing:-0.6px;transform:rotate(-90deg)">-100</div><div class="t" style="left:-19px;width:60px;text-align:center;top:500.1px;font-size:14.5px;line-height:18px;letter-spacing:-0.6px;transform:rotate(-90deg)">-120</div><div class="t" style="left:-19px;width:60px;text-align:center;top:543.2px;font-size:14.5px;line-height:18px;letter-spacing:-0.6px;transform:rotate(-90deg)">-140</div><div class="t" style="left:-19px;width:60px;text-align:center;top:586.3px;font-size:14.5px;line-height:18px;letter-spacing:-0.6px;transform:rotate(-90deg)">-160</div></div><div class="b" style="left:107px;top:191px;width:1201px;height:591px;background:#000;"></div><svg style="left:0;top:0" width="1600" height="900" shape-rendering="crispEdges" fill="none" stroke-width="1" font-family="'Liberation Sans',sans-serif"><defs><pattern id="ho" width="3" height="3" patternUnits="userSpaceOnUse"><path d="M0 0l3 3M3 0l-3 3" stroke="#808000" stroke-width=".9"/></pattern><pattern id="hc" width="3" height="3" patternUnits="userSpaceOnUse"><path d="M0 0l3 3M3 0l-3 3" stroke="#00ffff" stroke-width=".9"/></pattern><pattern id="ht" width="3" height="3" patternUnits="userSpaceOnUse"><path d="M0 0l3 3M3 0l-3 3" stroke="#008080" stroke-width=".9"/></pattern><pattern id="ht2" width="4" height="4" patternUnits="userSpaceOnUse"><rect width="4" height="4" fill="#006868"/><path d="M0 4l4-4" stroke="#00a0a0" stroke-width="1"/></pattern><clipPath id="cv"><rect x="107" y="191" width="1201" height="591"/></clipPath></defs><g clip-path="url(#cv)"><g fill="#fff" stroke="none" shape-rendering="auto" text-rendering="geometricPrecision"></g><circle cx="412.4" cy="332.4" r="49.8" stroke="#808000" fill="none"/><circle cx="412.4" cy="332.4" r="47" stroke="#0000ff" fill="none"/><circle cx="412.4" cy="332.4" r="40.8" stroke="#0000ff" fill="none"/><circle cx="412.4" cy="332.4" r="38.3" stroke="#0000ff" fill="none" stroke-dasharray="5 2"/><circle cx="412.4" cy="332.4" r="34.3" stroke="#0000ff" fill="none" stroke-dasharray="15 3"/><circle cx="412" cy="299.8" r="9" stroke="#0000ff" fill="none"/><circle cx="412" cy="299.8" r="5.3" stroke="#fff" fill="#fff"/><path d="M412.5 276L412.5 452" stroke="#fff"/><path d="M363 332.5L461 332.5" stroke="#fff"/><path d="M400 380L407.3 445" stroke="#808000" fill="none"/><path d="M424.5 380L417.5 445" stroke="#808000" fill="none"/><circle cx="412.4" cy="451.7" r="8.3" stroke="#808000" fill="none"/><circle cx="412.4" cy="451.7" r="4.5" stroke="#808000" fill="none"/><path d="M401 299.5L822 299.5" stroke="#fff"/><path d="M412 451.5L628 451.5" stroke="#fff"/><circle cx="529.5" cy="299" r="49.8" stroke="#808000" fill="none"/><circle cx="529.5" cy="299" r="47" stroke="#0000ff" fill="none"/><circle cx="529.5" cy="299" r="40.8" stroke="#0000ff" fill="none"/><circle cx="529.5" cy="299" r="38.3" stroke="#0000ff" fill="none" stroke-dasharray="5 2"/><circle cx="529.5" cy="299" r="34.3" stroke="#0000ff" fill="none" stroke-dasharray="15 3"/><circle cx="561.3" cy="299.3" r="9" stroke="#0000ff" fill="none"/><circle cx="561.3" cy="299.3" r="5.3" stroke="#fff" fill="#fff"/><path d="M531 347L556 413" stroke="#808000" fill="none"/><path d="M554.5 342L565 407" stroke="#808000" fill="none"/><circle cx="561.3" cy="415" r="8.3" stroke="#808000" fill="none"/><circle cx="561.3" cy="415" r="4.5" stroke="#808000" fill="none"/><path d="M529.5 299L561.3 415" stroke="#fff"/><path d="M561.5 228L561.5 452" stroke="#fff"/><path d="M529.5 228L529.5 299" stroke="#fff"/><path d="M529.5 232.5L561.5 232.5" stroke="#fff"/><path d="M534 231L539 231L539 234L534 234z" fill="#fff" stroke="none"/><path d="M557 234L552 234L552 231L557 231z" fill="#fff" stroke="none"/><text fill="#fff" stroke="none" x="545.5" y="230.5" font-size="14" text-anchor="middle" textLength="23.3" lengthAdjust="spacingAndGlyphs">14.9</text><path d="M618 386.5L895 386.5" stroke="#fff"/><path d="M622.5 386.5L622.5 451.5" stroke="#fff"/><path d="M624 391L624 396L621 396L621 391z" fill="#fff" stroke="none"/><path d="M621 447L621 442L624 442L624 447z" fill="#fff" stroke="none"/><text fill="#fff" stroke="none" x="616.5" y="423" font-size="14" text-anchor="middle" textLength="23.3" lengthAdjust="spacingAndGlyphs" transform="rotate(-90 616.5 418)">30.1</text><path d="M309 443.5L350 443.5" stroke="#c00000"/><path d="M329.5 423L329.5 464" stroke="#c00000"/><circle cx="329.5" cy="443.5" r="5" stroke="#c00000" fill="none"/><rect x="671.500" y="217.500" width="6" height="161" stroke="#808000"/><rect x="671.5" y="217.5" width="6" height="8" fill="url(#ho)" stroke="#808000"/><rect x="671.5" y="308.5" width="6" height="8" fill="url(#ho)" stroke="#808000"/><rect x="669.500" y="378.500" width="11" height="17" stroke="#808000"/><rect x="669.5" y="378.5" width="11" height="5" fill="url(#ho)" stroke="#808000"/><rect x="669.5" y="390.5" width="11" height="5" fill="url(#ho)" stroke="#808000"/><path d="M671 266.5L895 266.5" stroke="#fff"/><path d="M736.5 266.5L736.5 299.5" stroke="#fff"/><path d="M738 271L738 276L735 276L735 271z" fill="#fff" stroke="none"/><path d="M735 295L735 290L738 290L738 295z" fill="#fff" stroke="none"/><text fill="#fff" stroke="none" x="729" y="288" font-size="14" text-anchor="middle" textLength="23.3" lengthAdjust="spacingAndGlyphs" transform="rotate(-90 729 283)">15.2</text><circle cx="827.4" cy="266" r="49.8" stroke="#808000" fill="none"/><circle cx="827.4" cy="266" r="47" stroke="#0000ff" fill="none"/><circle cx="827.4" cy="266" r="40.8" stroke="#0000ff" fill="none"/><circle cx="827.4" cy="266" r="38.3" stroke="#0000ff" fill="none" stroke-dasharray="5 2"/><circle cx="827.4" cy="266" r="34.3" stroke="#0000ff" fill="none" stroke-dasharray="15 3"/><circle cx="827.5" cy="299" r="9" stroke="#0000ff" fill="none"/><circle cx="827.5" cy="299" r="5.3" stroke="#fff" fill="#fff"/><path d="M827.5 225L827.5 388" stroke="#fff"/><path d="M815 314L822 379" stroke="#808000" fill="none"/><path d="M839 314L832.5 379" stroke="#808000" fill="none"/><circle cx="827.4" cy="386.8" r="8.5" stroke="#808000" fill="none"/><circle cx="827.4" cy="386.8" r="4.5" stroke="#808000" fill="none"/><path d="M890.5 266.5L890.5 386.5" stroke="#fff"/><path d="M892 271L892 276L889 276L889 271z" fill="#fff" stroke="none"/><path d="M889 382L889 377L892 377L892 382z" fill="#fff" stroke="none"/><text fill="#fff" stroke="none" x="883.5" y="332" font-size="14" text-anchor="middle" textLength="23.3" lengthAdjust="spacingAndGlyphs" transform="rotate(-90 883.5 327)">55.7</text><rect x="713.500" y="432.500" width="4.500" height="95.500" fill="url(#hc)" stroke="#00ffff"/><path d="M715.5 433L715.5 528" stroke="#0000ff" stroke-dasharray="5 2"/><path d="M717.5 440L717.5 521" stroke="#0000ff" stroke-dasharray="5 2"/><path d="M720.500 439.500h10v7h-6v57.500h17.500v4.500h-17.500v9h17.500v4.500h-21.500z" fill="url(#hc)" stroke="#00ffff"/><path d="M730.5 433L730.5 504" stroke="#0000ff"/><path d="M742.5 504L742.5 522" stroke="#0000ff"/><path d="M724.5 446L724.5 504" stroke="#0000ff"/><rect x="728.500" y="521.500" width="2" height="7" stroke="#0000ff"/><path d="M728.5 501L728.5 518" stroke="#fff"/><path d="M718.5 480.5L894 480.5" stroke="#fff"/><path d="M718.5 512.5L894 512.5" stroke="#fff"/><path d="M827.5 432.5L827.5 529" stroke="#fff"/><path d="M722.5 408L722.5 437" stroke="#fff"/><path d="M730.5 408L730.5 437" stroke="#fff"/><path d="M705.5 413.5L747.5 413.5" stroke="#fff"/><path d="M718 415L713 415L713 412L718 412z" fill="#fff" stroke="none"/><path d="M735 412L740 412L740 415L735 415z" fill="#fff" stroke="none"/><text fill="#fff" stroke="none" x="726.5" y="411.5" font-size="14" text-anchor="middle" textLength="6.7" lengthAdjust="spacingAndGlyphs">4</text><path d="M704 430.5L746 430.5" stroke="#fff"/><path d="M718 432L713 432L713 429L718 429z" fill="#fff" stroke="none"/><path d="M735 429L740 429L740 432L735 432z" fill="#fff" stroke="none"/><text fill="#fff" stroke="none" x="725.5" y="428.5" font-size="14" text-anchor="middle" textLength="6.7" lengthAdjust="spacingAndGlyphs">3</text><path d="M681.5 432.5L681.5 528.5" stroke="#fff"/><path d="M683 437L683 442L680 442L680 437z" fill="#fff" stroke="none"/><path d="M680 524L680 519L683 519L683 524z" fill="#fff" stroke="none"/><path d="M714 432.5L677.5 432.5" stroke="#fff"/><path d="M714 528.5L677.5 528.5" stroke="#fff"/><text fill="#fff" stroke="none" x="675" y="485.5" font-size="14" text-anchor="middle" textLength="23.3" lengthAdjust="spacingAndGlyphs" transform="rotate(-90 675 480.5)">44.2</text><path d="M695.5 439.5L695.5 521.5" stroke="#fff"/><path d="M697 444L697 449L694 449L694 444z" fill="#fff" stroke="none"/><path d="M694 517L694 512L697 512L697 517z" fill="#fff" stroke="none"/><path d="M720 439.5L691.5 439.5" stroke="#fff"/><path d="M720 521.5L691.5 521.5" stroke="#fff"/><text fill="#fff" stroke="none" x="689.5" y="485" font-size="14" text-anchor="middle" textLength="13.4" lengthAdjust="spacingAndGlyphs" transform="rotate(-90 689.5 480)">38</text><path d="M711.5 441.5L711.5 519.5" stroke="#fff"/><path d="M713 446L713 451L710 451L710 446z" fill="#fff" stroke="none"/><path d="M710 515L710 510L713 510L713 515z" fill="#fff" stroke="none"/><path d="M714 441.5L707.5 441.5" stroke="#fff"/><path d="M714 519.5L707.5 519.5" stroke="#fff"/><text fill="#fff" stroke="none" x="705" y="485" font-size="14" text-anchor="middle" textLength="13.4" lengthAdjust="spacingAndGlyphs" transform="rotate(-90 705 480)">36</text><path d="M707 441.5L714 441.5" stroke="#fff"/><path d="M707 519.5L714 519.5" stroke="#fff"/><path d="M754.5 491L754.5 535" stroke="#fff"/><path d="M753 504L753 499L756 499L756 504z" fill="#fff" stroke="none"/><path d="M756 522L756 527L753 527L753 522z" fill="#fff" stroke="none"/><text fill="#fff" stroke="none" x="748" y="518" font-size="14" text-anchor="middle" textLength="6.7" lengthAdjust="spacingAndGlyphs" transform="rotate(-90 748 513)">4</text><path d="M742 508.5L758 508.5" stroke="#fff"/><path d="M742 517.5L758 517.5" stroke="#fff"/><path d="M769.5 486L769.5 539" stroke="#fff"/><path d="M768 500L768 495L771 495L771 500z" fill="#fff" stroke="none"/><path d="M771 526L771 531L768 531L768 526z" fill="#fff" stroke="none"/><text fill="#fff" stroke="none" x="763" y="518" font-size="14" text-anchor="middle" textLength="6.7" lengthAdjust="spacingAndGlyphs" transform="rotate(-90 763 513)">8</text><path d="M742 504.5L774 504.5" stroke="#fff"/><path d="M742 521.5L774 521.5" stroke="#fff"/><circle cx="827.4" cy="480.5" r="47" stroke="#0000ff" fill="none"/><circle cx="827.4" cy="480.5" r="40.8" stroke="#0000ff" fill="none"/><circle cx="827.4" cy="480.5" r="38.3" stroke="#0000ff" fill="none" stroke-dasharray="5 2"/><circle cx="827.4" cy="480.5" r="34.3" stroke="#0000ff" fill="none" stroke-dasharray="15 3"/><circle cx="827.5" cy="513" r="9" stroke="#0000ff" fill="none"/><circle cx="827.5" cy="513" r="5.3" stroke="#fff" fill="#fff"/><path d="M827.4 480L780 469.5" stroke="#fff"/><path d="M780 469.5L790.1 470L789.4 473.3z" fill="#fff" stroke="none"/><text fill="#fff" stroke="none" x="805.2" y="473" font-size="14" text-anchor="middle" textLength="23.3" lengthAdjust="spacingAndGlyphs" transform="rotate(12.490405717909198 805.2 467.9)">22.7</text><path d="M827.4 480L801.5 448.5" stroke="#fff"/><path d="M801.5 448.5L809.2 455.1L806.5 457.3z" fill="#fff" stroke="none"/><text fill="#fff" stroke="none" x="821.9" y="467.4" font-size="14" text-anchor="middle" textLength="13.4" lengthAdjust="spacingAndGlyphs" transform="rotate(50.5721978039638 821.9 462.3)">19</text><path d="M827.4 480L861.5 462" stroke="#fff"/><path d="M861.5 462L853.5 468.2L851.9 465.2z" fill="#fff" stroke="none"/><text fill="#fff" stroke="none" x="841.2" y="469.8" font-size="14" text-anchor="middle" textLength="13.4" lengthAdjust="spacingAndGlyphs" transform="rotate(-27.827746726979772 841.2 464.8)">18</text><path d="M827.4 480L896 471" stroke="#fff"/><path d="M866.5 475L876.2 471.9L876.6 475.3z" fill="#fff" stroke="none"/><text fill="#fff" stroke="none" x="879" y="470" font-size="14" text-anchor="middle" textLength="23.3" lengthAdjust="spacingAndGlyphs" transform="rotate(-7 879 465)">15.9</text><path d="M888.5 480.5L888.5 512.5" stroke="#fff"/><path d="M890 485L890 490L887 490L887 485z" fill="#fff" stroke="none"/><path d="M887 508L887 503L890 503L890 508z" fill="#fff" stroke="none"/><text fill="#fff" stroke="none" x="882.5" y="501.5" font-size="14" text-anchor="middle" textLength="13.4" lengthAdjust="spacingAndGlyphs" transform="rotate(-90 882.5 496.5)">15</text><rect x="420.500" y="516.500" width="8" height="159" stroke="#808000"/><rect x="420.5" y="516.5" width="8" height="7" fill="url(#ho)" stroke="#808000"/><rect x="420.5" y="603.5" width="8" height="8" fill="url(#ho)" stroke="#808000"/><rect x="418.500" y="675.500" width="11" height="17" stroke="#808000"/><path d="M420.5 484L420.5 516" stroke="#fff"/><path d="M428.5 484L428.5 516" stroke="#fff"/><path d="M403.5 490.5L445.5 490.5" stroke="#fff"/><path d="M416 492L411 492L411 489L416 489z" fill="#fff" stroke="none"/><path d="M433 489L438 489L438 492L433 492z" fill="#fff" stroke="none"/><text fill="#fff" stroke="none" x="424.5" y="489" font-size="14" text-anchor="middle" textLength="6.7" lengthAdjust="spacingAndGlyphs">3</text><path d="M390.5 516.5L390.5 610.5" stroke="#fff"/><path d="M392 521L392 526L389 526L389 521z" fill="#fff" stroke="none"/><path d="M389 606L389 601L392 601L392 606z" fill="#fff" stroke="none"/><path d="M420 516.5L386.5 516.5" stroke="#fff"/><path d="M420 610.5L386.5 610.5" stroke="#fff"/><text fill="#fff" stroke="none" x="384" y="568" font-size="14" text-anchor="middle" textLength="13.4" lengthAdjust="spacingAndGlyphs" transform="rotate(-90 384 563)">44</text><path d="M410.5 521.5L410.5 605.5" stroke="#fff"/><path d="M412 526L412 531L409 531L409 526z" fill="#fff" stroke="none"/><path d="M409 601L409 596L412 596L412 601z" fill="#fff" stroke="none"/><path d="M420 521.5L406.5 521.5" stroke="#fff"/><path d="M420 605.5L406.5 605.5" stroke="#fff"/><text fill="#fff" stroke="none" x="405" y="568" font-size="14" text-anchor="middle" textLength="13.4" lengthAdjust="spacingAndGlyphs" transform="rotate(-90 405 563)">38</text><path d="M390.5 610.5L390.5 683.5" stroke="#fff"/><path d="M392 615L392 620L389 620L389 615z" fill="#fff" stroke="none"/><path d="M389 679L389 674L392 674L392 679z" fill="#fff" stroke="none"/><text fill="#fff" stroke="none" x="384" y="652" font-size="14" text-anchor="middle" textLength="23.3" lengthAdjust="spacingAndGlyphs" transform="rotate(-90 384 647)">33.7</text><path d="M386 683.5L581 683.5" stroke="#fff"/><path d="M420 563.5L581 563.5" stroke="#fff"/><path d="M446.5 658.5L446.5 709.5" stroke="#fff"/><path d="M445 671L445 666L448 666L448 671z" fill="#fff" stroke="none"/><path d="M448 697L448 702L445 702L445 697z" fill="#fff" stroke="none"/><path d="M429 675.5L450.5 675.5" stroke="#fff"/><path d="M429 692.5L450.5 692.5" stroke="#fff"/><text fill="#fff" stroke="none" x="440" y="689" font-size="14" text-anchor="middle" textLength="6.7" lengthAdjust="spacingAndGlyphs" transform="rotate(-90 440 684)">4</text><path d="M418.5 693L418.5 714" stroke="#fff"/><path d="M429.5 693L429.5 714" stroke="#fff"/><path d="M401.5 710.5L446.5 710.5" stroke="#fff"/><path d="M414 712L409 712L409 709L414 709z" fill="#fff" stroke="none"/><path d="M434 709L439 709L439 712L434 712z" fill="#fff" stroke="none"/><text fill="#fff" stroke="none" x="424" y="710" font-size="14" text-anchor="middle" textLength="6.7" lengthAdjust="spacingAndGlyphs">5</text><circle cx="504.5" cy="563.5" r="41" stroke="#808000" fill="none"/><path d="M492 609.500A48 48 0 1 1 517 609.500L508.500 673A8.300 8.300 0 1 1 500.500 673z" stroke="#808000"/><circle cx="504.5" cy="684" r="4.3" stroke="#808000" fill="none"/><path d="M504.5 516.5L504.5 684" stroke="#fff"/><path d="M504.5 563.5L540 533.5" stroke="#fff"/><path d="M540 533.5L533.5 541.3L531.3 538.7z" fill="#fff" stroke="none"/><text fill="#fff" stroke="none" x="517.7" y="548.2" font-size="14" text-anchor="middle" textLength="13.4" lengthAdjust="spacingAndGlyphs" transform="rotate(-40.200163886095304 517.7 543.2)">22</text><path d="M504.5 563.5L537 587.5" stroke="#fff"/><path d="M537 587.5L527.9 582.9L530 580.2z" fill="#fff" stroke="none"/><text fill="#fff" stroke="none" x="528.8" y="577.8" font-size="14" text-anchor="middle" textLength="13.4" lengthAdjust="spacingAndGlyphs" transform="rotate(36.44444175658711 528.8 572.7)">19</text><path d="M577.5 563.5L577.5 683.5" stroke="#fff"/><path d="M579 568L579 573L576 573L576 568z" fill="#fff" stroke="none"/><path d="M576 679L576 674L579 674L579 679z" fill="#fff" stroke="none"/><text fill="#fff" stroke="none" x="570.5" y="628.5" font-size="14" text-anchor="middle" textLength="23.3" lengthAdjust="spacingAndGlyphs" transform="rotate(-90 570.5 623.5)">55.7</text><path d="M536.5 612.5L536.5 683.5" stroke="#fff"/><path d="M538 617L538 622L535 622L535 617z" fill="#fff" stroke="none"/><path d="M535 679L535 674L538 674L538 679z" fill="#fff" stroke="none"/><path d="M520 612.5L540.5 612.5" stroke="#fff"/><path d="M520 683.5L540.5 683.5" stroke="#fff"/><text fill="#fff" stroke="none" x="530.5" y="652" font-size="14" text-anchor="middle" textLength="23.3" lengthAdjust="spacingAndGlyphs" transform="rotate(-90 530.5 647)">32.9</text><path d="M476 612.5L488.5 612.5L488.5 750" stroke="#fff" fill="none"/><path d="M520.5 612.5L520.5 750" stroke="#fff"/><path d="M496.5 684L496.5 727" stroke="#fff"/><path d="M512.5 684L512.5 727" stroke="#fff"/><path d="M479.5 723.5L529.5 723.5" stroke="#fff"/><path d="M492 725L487 725L487 722L492 722z" fill="#fff" stroke="none"/><path d="M517 722L522 722L522 725L517 725z" fill="#fff" stroke="none"/><text fill="#fff" stroke="none" x="504.5" y="722" font-size="14" text-anchor="middle" textLength="6.7" lengthAdjust="spacingAndGlyphs">8</text><path d="M488.5 745.5L520.5 745.5" stroke="#fff"/><path d="M493 744L498 744L498 747L493 747z" fill="#fff" stroke="none"/><path d="M516 747L511 747L511 744L516 744z" fill="#fff" stroke="none"/><text fill="#fff" stroke="none" x="505" y="743.5" font-size="14" text-anchor="middle" textLength="23.3" lengthAdjust="spacingAndGlyphs">14.8</text><circle cx="630.5" cy="637.4" r="22" stroke="#008080" fill="none"/><circle cx="630.5" cy="637.4" r="18.5" stroke="#00ffff" fill="none"/><circle cx="630.5" cy="637.4" r="11.5" stroke="#008080" fill="none"/><circle cx="630.5" cy="637.4" r="7.3" stroke="#00ffff" fill="none"/><circle cx="630.5" cy="637.4" r="17.3" stroke="#008080" fill="none"/><path d="M607 637.5L717 637.5" stroke="#fff"/><path d="M630.5 616L630.5 659" stroke="#fff"/><path d="M608.5 637.5L608.5 711" stroke="#fff"/><path d="M652.5 637.5L652.5 711" stroke="#fff"/><path d="M619.5 637.5L619.5 693" stroke="#fff"/><path d="M641.5 637.5L641.5 693" stroke="#fff"/><path d="M624.5 637.5L624.5 672" stroke="#fff"/><path d="M637.5 637.5L637.5 672" stroke="#fff"/><path d="M607.5 671.5L654.5 671.5" stroke="#fff"/><path d="M620 673L615 673L615 670L620 670z" fill="#fff" stroke="none"/><path d="M642 670L647 670L647 673L642 673z" fill="#fff" stroke="none"/><text fill="#fff" stroke="none" x="645" y="670.5" font-size="14" text-anchor="middle" textLength="16.6" lengthAdjust="spacingAndGlyphs">5.3</text><path d="M619.5 689.5L641.5 689.5" stroke="#fff"/><path d="M624 688L629 688L629 691L624 691z" fill="#fff" stroke="none"/><path d="M637 691L632 691L632 688L637 688z" fill="#fff" stroke="none"/><text fill="#fff" stroke="none" x="630.5" y="688.5" font-size="14" text-anchor="middle" textLength="23.3" lengthAdjust="spacingAndGlyphs">10.1</text><path d="M608.5 706.5L652.5 706.5" stroke="#fff"/><path d="M613 705L618 705L618 708L613 708z" fill="#fff" stroke="none"/><path d="M648 708L643 708L643 705L648 705z" fill="#fff" stroke="none"/><text fill="#fff" stroke="none" x="630.5" y="705.5" font-size="14" text-anchor="middle" textLength="23.3" lengthAdjust="spacingAndGlyphs">20.4</text><rect x="692.5" y="627.5" width="6" height="21" fill="url(#ht)" stroke="#008080"/><rect x="700.5" y="622.5" width="5" height="33" fill="url(#hc)" stroke="#00ffff"/><rect x="706.5" y="619.5" width="4" height="38" fill="url(#ht)" stroke="#008080"/><rect x="711.5" y="615.5" width="5" height="45" fill="url(#hc)" stroke="#00ffff"/><rect x="703.500" y="655.500" width="7" height="6" stroke="#fff"/><path d="M714.5 596L714.5 615" stroke="#fff"/><path d="M716.5 596L716.5 708" stroke="#fff"/><path d="M697.5 607.5L733.5 607.5" stroke="#fff"/><path d="M710 609L705 609L705 606L710 606z" fill="#fff" stroke="none"/><path d="M721 606L726 606L726 609L721 609z" fill="#fff" stroke="none"/><text fill="#fff" stroke="none" x="715.5" y="605.5" font-size="14" text-anchor="middle" textLength="6.7" lengthAdjust="spacingAndGlyphs">1</text><path d="M675 622.5L714 622.5" stroke="#fff"/><path d="M688 624L683 624L683 621L688 621z" fill="#fff" stroke="none"/><path d="M703 621L708 621L708 624L703 624z" fill="#fff" stroke="none"/><text fill="#fff" stroke="none" x="707.5" y="621.5" font-size="14" text-anchor="middle" textLength="16.6" lengthAdjust="spacingAndGlyphs">2.6</text><path d="M732.5 619.5L732.5 654.5" stroke="#fff"/><path d="M734 624L734 629L731 629L731 624z" fill="#fff" stroke="none"/><path d="M731 650L731 645L734 645L734 650z" fill="#fff" stroke="none"/><path d="M716 619.5L736.5 619.5" stroke="#fff"/><path d="M716 654.5L736.5 654.5" stroke="#fff"/><text fill="#fff" stroke="none" x="726" y="643" font-size="14" text-anchor="middle" textLength="23.3" lengthAdjust="spacingAndGlyphs" transform="rotate(-90 726 638)">17.2</text><path d="M750.5 615.5L750.5 659.5" stroke="#fff"/><path d="M752 620L752 625L749 625L749 620z" fill="#fff" stroke="none"/><path d="M749 655L749 650L752 650L752 655z" fill="#fff" stroke="none"/><path d="M716 615.5L754.5 615.5" stroke="#fff"/><path d="M716 659.5L754.5 659.5" stroke="#fff"/><text fill="#fff" stroke="none" x="744" y="643" font-size="14" text-anchor="middle" textLength="23.3" lengthAdjust="spacingAndGlyphs" transform="rotate(-90 744 638)">20.4</text><path d="M692.5 616L692.5 669" stroke="#fff"/><path d="M703.5 616L703.5 708" stroke="#fff"/><path d="M709.5 660L709.5 688" stroke="#fff"/><path d="M675 665.5L721 665.5" stroke="#fff"/><path d="M688 667L683 667L683 664L688 664z" fill="#fff" stroke="none"/><path d="M708 664L713 664L713 667L708 667z" fill="#fff" stroke="none"/><text fill="#fff" stroke="none" x="707.5" y="661.1" font-size="10" text-anchor="middle" textLength="4.8" lengthAdjust="spacingAndGlyphs">5</text><path d="M686 682.5L721 682.5" stroke="#fff"/><path d="M699 684L694 684L694 681L699 681z" fill="#fff" stroke="none"/><path d="M721 681L726 681L726 684L721 684z" fill="#fff" stroke="none"/><text fill="#fff" stroke="none" x="721" y="681" font-size="14" text-anchor="middle" textLength="16.6" lengthAdjust="spacingAndGlyphs">3.2</text><path d="M686 704.5L734 704.5" stroke="#fff"/><path d="M699 706L694 706L694 703L699 703z" fill="#fff" stroke="none"/><path d="M721 703L726 703L726 706L721 706z" fill="#fff" stroke="none"/><text fill="#fff" stroke="none" x="726" y="703.5" font-size="14" text-anchor="middle" textLength="16.6" lengthAdjust="spacingAndGlyphs">5.8</text><circle cx="826" cy="637.4" r="67" stroke="#008080" fill="none"/><circle cx="826" cy="637.4" r="56.9" stroke="#008080" fill="none"/><circle cx="826" cy="637.4" r="51.6" stroke="#008080" fill="none"/><circle cx="789.5" cy="637.4" r="13.8" stroke="#008080" fill="none"/><circle cx="814.7" cy="602.7" r="13.8" stroke="#008080" fill="none"/><circle cx="855.5" cy="615.9" r="13.8" stroke="#008080" fill="none"/><circle cx="855.5" cy="658.9" r="13.8" stroke="#008080" fill="none"/><circle cx="814.7" cy="672.1" r="13.8" stroke="#008080" fill="none"/><circle cx="826" cy="637.4" r="36.6" stroke="#fff" fill="none"/><circle cx="826" cy="637.4" r="18.2" stroke="#ff00ff" fill="none" stroke-dasharray="2 2"/><circle cx="826" cy="637.4" r="17.2" stroke="#00ffff" fill="none"/><circle cx="826" cy="637.4" r="13.8" stroke="#00ffff" fill="none"/><circle cx="826" cy="637.4" r="10.3" stroke="#0000ff" fill="none"/><circle cx="826" cy="637.4" r="5" stroke="#fff" fill="#fff"/><path d="M758 637.5L912 637.5" stroke="#fff"/><path d="M826.5 545L826.5 705" stroke="#fff"/><path d="M869.5 545L869.5 647" stroke="#fff"/><path d="M857.5 560L857.5 643.5" stroke="#fff"/><path d="M826.5 548.5L869.5 548.5" stroke="#fff"/><path d="M831 547L836 547L836 550L831 550z" fill="#fff" stroke="none"/><path d="M865 550L860 550L860 547L865 547z" fill="#fff" stroke="none"/><text fill="#fff" stroke="none" x="847.5" y="547.5" font-size="14" text-anchor="middle" textLength="23.3" lengthAdjust="spacingAndGlyphs">20.4</text><path d="M826.5 563.5L857.5 563.5" stroke="#fff"/><path d="M831 562L836 562L836 565L831 565z" fill="#fff" stroke="none"/><path d="M853 565L848 565L848 562L853 562z" fill="#fff" stroke="none"/><text fill="#fff" stroke="none" x="842" y="562.5" font-size="14" text-anchor="middle" textLength="13.4" lengthAdjust="spacingAndGlyphs">15</text><path d="M826 637.4L793.5 621.5" stroke="#fff"/><path d="M793.5 621.5L803.2 624.4L801.7 627.4z" fill="#fff" stroke="none"/><text fill="#fff" stroke="none" x="815" y="630.4" font-size="14" text-anchor="middle" textLength="23.3" lengthAdjust="spacingAndGlyphs" transform="rotate(26.069302786642595 815 625.3)">16.9</text><path d="M826 637.4L874 626" stroke="#fff"/><path d="M826 637.4L896 687" stroke="#fff"/><path d="M826 637.4L874.5 648.5" stroke="#fff"/><path d="M908 640A82 82 0 0 1 894.500 685" stroke="#fff"/><path d="M908 639.5L910.6 649.3L907.2 649.6z" fill="#fff" stroke="none"/><path d="M894 686L897.9 676.6L900.7 678.4z" fill="#fff" stroke="none"/><text fill="#fff" stroke="none" x="898.5" y="665.5" font-size="14" text-anchor="middle" textLength="33.2" lengthAdjust="spacingAndGlyphs" transform="rotate(-72 898.5 660.5)">35.54°</text><path d="M939.500 570.500h19v11l-5 5v28.500h6v17.500h-19v-11.500l5-6V586.500l-6-5z" fill="url(#ht2)" stroke="#008080"/><path d="M940.500 643.500h19v16h-6v30l5 5v10.500h-19v-10.500l6-5v-28.500l-5-7z" fill="url(#ht2)" stroke="#008080"/><path d="M1050.5 570.5L1050.5 704.5" stroke="#fff"/><path d="M1052 575L1052 580L1049 580L1049 575z" fill="#fff" stroke="none"/><path d="M1049 700L1049 695L1052 695L1052 700z" fill="#fff" stroke="none"/><path d="M958 570.5L1054.5 570.5" stroke="#fff"/><path d="M958 704.5L1054.5 704.5" stroke="#fff"/><text fill="#fff" stroke="none" x="1044.5" y="642.5" font-size="14" text-anchor="middle" textLength="13.4" lengthAdjust="spacingAndGlyphs" transform="rotate(-90 1044.5 637.5)">62</text><path d="M1034.5 581.5L1034.5 694.5" stroke="#fff"/><path d="M1036 586L1036 591L1033 591L1033 586z" fill="#fff" stroke="none"/><path d="M1033 690L1033 685L1036 685L1036 690z" fill="#fff" stroke="none"/><path d="M958 581.5L1038.5 581.5" stroke="#fff"/><path d="M958 694.5L1038.5 694.5" stroke="#fff"/><text fill="#fff" stroke="none" x="1028.5" y="643" font-size="14" text-anchor="middle" textLength="23.3" lengthAdjust="spacingAndGlyphs" transform="rotate(-90 1028.5 638)">52.5</text><path d="M1016.5 586.5L1016.5 689.5" stroke="#fff"/><path d="M1018 591L1018 596L1015 596L1015 591z" fill="#fff" stroke="none"/><path d="M1015 685L1015 680L1018 680L1018 685z" fill="#fff" stroke="none"/><path d="M953 586.5L1020.5 586.5" stroke="#fff"/><path d="M953 689.5L1020.5 689.5" stroke="#fff"/><text fill="#fff" stroke="none" x="1010.5" y="643" font-size="14" text-anchor="middle" textLength="23.3" lengthAdjust="spacingAndGlyphs" transform="rotate(-90 1010.5 638)">47.7</text><path d="M997.5 615.5L997.5 658.5" stroke="#fff"/><path d="M999 620L999 625L996 625L996 620z" fill="#fff" stroke="none"/><path d="M996 654L996 649L999 649L999 654z" fill="#fff" stroke="none"/><path d="M958 615.5L1001.5 615.5" stroke="#fff"/><path d="M958 658.5L1001.5 658.5" stroke="#fff"/><text fill="#fff" stroke="none" x="991" y="642" font-size="14" text-anchor="middle" textLength="23.3" lengthAdjust="spacingAndGlyphs" transform="rotate(-90 991 637)">19.8</text><path d="M976.5 615.5L976.5 659" stroke="#fff"/><path d="M975 628L975 623L978 623L978 628z" fill="#fff" stroke="none"/><path d="M978 647L978 652L975 652L975 647z" fill="#fff" stroke="none"/><text fill="#fff" stroke="none" x="971" y="628.5" font-size="14" text-anchor="middle" textLength="16.6" lengthAdjust="spacingAndGlyphs" transform="rotate(-90 971 623.5)">4.7</text><path d="M940 621.5L977 621.5" stroke="#fff"/><path d="M960 632.5L981 632.5" stroke="#fff"/><path d="M960 642.5L981 642.5" stroke="#fff"/><path d="M922.5 623.5L922.5 651.5" stroke="#fff"/><path d="M924 628L924 633L921 633L921 628z" fill="#fff" stroke="none"/><path d="M921 647L921 642L924 642L924 647z" fill="#fff" stroke="none"/><path d="M938 623.5L918.5 623.5" stroke="#fff"/><path d="M938 651.5L918.5 651.5" stroke="#fff"/><text fill="#fff" stroke="none" x="915" y="642" font-size="14" text-anchor="middle" textLength="23.3" lengthAdjust="spacingAndGlyphs" transform="rotate(-90 915 637)">12.7</text><path d="M940.5 654L940.5 758" stroke="#fff"/><path d="M959.5 634L959.5 758" stroke="#fff"/><path d="M945.5 689L945.5 722" stroke="#fff"/><path d="M953.5 689L953.5 738" stroke="#fff"/><path d="M927 718.5L970 718.5" stroke="#fff"/><path d="M941 720L936 720L936 717L941 717z" fill="#fff" stroke="none"/><path d="M958 717L963 717L963 720L958 720z" fill="#fff" stroke="none"/><text fill="#fff" stroke="none" x="962" y="717.5" font-size="14" text-anchor="middle" textLength="16.6" lengthAdjust="spacingAndGlyphs">3.2</text><path d="M923.5 734.5L974.5 734.5" stroke="#fff"/><path d="M936 736L931 736L931 733L936 733z" fill="#fff" stroke="none"/><path d="M962 733L967 733L967 736L962 736z" fill="#fff" stroke="none"/><text fill="#fff" stroke="none" x="948.5" y="733.5" font-size="14" text-anchor="middle" textLength="6.7" lengthAdjust="spacingAndGlyphs">8</text><path d="M923.5 753.5L976.5 753.5" stroke="#fff"/><path d="M936 755L931 755L931 752L936 752z" fill="#fff" stroke="none"/><path d="M964 752L969 752L969 755L964 755z" fill="#fff" stroke="none"/><text fill="#fff" stroke="none" x="950" y="752" font-size="14" text-anchor="middle" textLength="16.6" lengthAdjust="spacingAndGlyphs">9.1</text></g></svg><div class="b" style="left:1308px;top:191px;width:21px;height:591px;background:#f7f7f7;"></div><div class="btn" style="left:1308px;top:191px;width:21px;height:21px"></div><div class="btn" style="left:1308px;top:761px;width:21px;height:21px"></div><div class="btn" style="left:1308px;top:411px;width:21px;height:151px"></div><div class="b" style="left:107px;top:783px;width:1150px;height:21px;background:#f7f7f7;"></div><div class="btn" style="left:107px;top:783px;width:21px;height:21px"></div><div class="btn" style="left:1236px;top:783px;width:21px;height:21px"></div><div class="btn" style="left:128px;top:783px;width:844px;height:21px"></div><div class="b" style="left:86px;top:782px;width:21px;height:22px;background:#f0f0f0;border:1px solid;border-color:#fff #a0a0a0 #a0a0a0 #fff;"></div><svg style="left:0;top:0" width="1600" height="900"><path d="M1313.500 205.500h9l-4.500-5.500zM1313.500 768.500h9l-4.500 5.500zM121.500 788.500v9l-5.500-4.500zM1243.500 788.500v9l5.500-4.500z" fill="#000"/></svg><div class="t" style="left:1277px;top:786.3px;font-size:12.5px;line-height:15px;color:#000;letter-spacing:0.373px;">10 &lt; 100</div><div class="t" style="left:1338px;top:144.0px;font-size:13px;line-height:16px;color:#000;letter-spacing:-0.144px;">Liste des calques</div><svg style="left:1523px;top:145px" width="11" height="11"><path d="M3.500 1.500h6v5h-6zM3.500 2.500h6M1.500 4.500h5v5h-5zM1.500 5.500h5" fill="#f0f0f0" stroke="#000" stroke-width="1"/></svg><svg style="left:1540px;top:146px" width="10" height="10"><path d="M1 1l8 8M9 1l-8 8" stroke="#000" stroke-width="1.600"/></svg><div class="btn" style="left:1336px;top:163px;width:44px;height:26px;"></div><div class="btn" style="left:1380px;top:163px;width:43px;height:26px;"></div><div class="btn" style="left:1423px;top:163px;width:44px;height:26px;"></div><div class="btn" style="left:1467px;top:163px;width:43px;height:26px;border-color:#fff #000 #000 #fff;"></div><div class="btn" style="left:1510px;top:163px;width:44px;height:26px;"></div><svg style="left:0;top:0" width="1600" height="900"><g transform="translate(1357.5,176) scale(1.25)"><path d="M-8.500 .8C-5-6 5-6 8.500-.2 5 5.500-5 5.500-8.500 .8z" fill="#111"/><path d="M-5.500 1.200C-3.200 3.600 3.200 3.600 5.500 .9 3.200-1.800-3.200-1.800-5.500 1.200z" fill="#fff"/><circle cx="0" cy=".6" r="2.700" fill="#111"/><circle cx="-.9" cy="-.3" r=".8" fill="#fff"/></g><g transform="translate(1401,176) scale(1.25)"><path d="M-8.500 .8C-5-6 5-6 8.500-.2 5 5.500-5 5.500-8.500 .8z" fill="#a4a4a4"/><path d="M-5.500 1.200C-3.200 3.600 3.200 3.600 5.500 .9 3.200-1.800-3.200-1.800-5.500 1.200z" fill="#fff"/><circle cx="0" cy=".6" r="2.700" fill="#a4a4a4"/><circle cx="-.9" cy="-.3" r=".8" fill="#fff"/></g><path d="M1437 176h15M1444.500 168.500v15" stroke="#e00000" stroke-width="3.200"/><path d="M1480 176.500h15" stroke="#a0a0a0" stroke-width="2.600"/><path d="M1522 183l2.500-6.500L1541 165l3.500 3.500L1528 181z" fill="#e8a030" stroke="#a86810" stroke-width=".7"/><path d="M1541 165l3.500 3.500 1.500-1.800-3.200-3.200z" fill="#e04040"/><path d="M1522 183l2.500-6.500 3.500 4.500z" fill="#e8d0a8"/><path d="M1522 183l.9-2.500 1.500 1.700z" fill="#333"/></svg><div class="b" style="left:1336px;top:189px;width:1217px;height:0px;"></div><div class="b" style="left:1336px;top:190px;width:217px;height:384px;background:#fff;border:1px solid #696969;border-top:2px solid #828282;border-left:2px solid #828282;border-right-color:#e8e8e8;border-bottom-color:#e8e8e8;"></div><div class="b" style="left:1338px;top:192px;width:193px;height:19px;background:#f0f0f0;"></div><svg style="left:0;top:0" width="1600" height="900"><rect x="1341.500" y="197.5" width="15" height="7.500" fill="#0f2d50" stroke="#000" stroke-width="1"/><g transform="translate(1498,201) scale(0.95)"><path d="M-8.500 .8C-5-6 5-6 8.500-.2 5 5.500-5 5.500-8.500 .8z" fill="#10305a"/><path d="M-5.500 1.200C-3.200 3.600 3.200 3.600 5.500 .9 3.200-1.800-3.200-1.800-5.500 1.200z" fill="#fff"/><circle cx="0" cy=".6" r="2.700" fill="#10305a"/><circle cx="-.9" cy="-.3" r=".8" fill="#9ab"/></g><g transform="translate(1520,200) scale(1.0)"><path d="M-3.200 -.5v-2.500a3.200 3.200 0 0 1 6.400 0v2.500" fill="none" stroke="#7d9fc8" stroke-width="1.500"/><rect x="-5" y="-1" width="10" height="8" fill="#7d9fc8"/></g><rect x="1341.500" y="217.5" width="15" height="7.500" fill="#ff00ff" stroke="#000" stroke-width="1"/><g transform="translate(1498,221) scale(0.95)"><path d="M-8.500 .8C-5-6 5-6 8.500-.2 5 5.500-5 5.500-8.500 .8z" fill="#b4b4b4"/><path d="M-5.500 1.200C-3.200 3.600 3.200 3.600 5.500 .9 3.200-1.800-3.200-1.800-5.500 1.200z" fill="#fff"/><circle cx="0" cy=".6" r="2.700" fill="#b4b4b4"/><circle cx="-.9" cy="-.3" r=".8" fill="#fff"/></g><g transform="translate(1520,220) scale(1.0)"><path d="M-3.200 -.5v-2.500a3.200 3.200 0 0 1 6.400 0v2.500" fill="none" stroke="#a2a2a2" stroke-width="1.500"/><rect x="-5" y="-1" width="10" height="8" fill="#a2a2a2"/></g><rect x="1341.500" y="237.5" width="15" height="7.500" fill="#000" stroke="#000" stroke-width="1"/><g transform="translate(1498,241) scale(0.95)"><path d="M-8.500 .8C-5-6 5-6 8.500-.2 5 5.500-5 5.500-8.500 .8z" fill="#0a0a0a"/><path d="M-5.500 1.200C-3.200 3.600 3.200 3.600 5.500 .9 3.200-1.800-3.200-1.800-5.500 1.200z" fill="#fff"/><circle cx="0" cy=".6" r="2.700" fill="#0a0a0a"/><circle cx="-.9" cy="-.3" r=".8" fill="#fff"/></g><g transform="translate(1520,240) scale(1.0)"><path d="M-3.200 -.5v-2.500a3.200 3.200 0 0 1 6.400 0v2.500" fill="none" stroke="#a2a2a2" stroke-width="1.500"/><rect x="-5" y="-1" width="10" height="8" fill="#a2a2a2"/></g><rect x="1341.500" y="257.5" width="15" height="7.500" fill="#808000" stroke="#000" stroke-width="1"/><g transform="translate(1498,261) scale(0.95)"><path d="M-8.500 .8C-5-6 5-6 8.500-.2 5 5.500-5 5.500-8.500 .8z" fill="#0a0a0a"/><path d="M-5.500 1.200C-3.200 3.600 3.200 3.600 5.500 .9 3.200-1.800-3.200-1.800-5.500 1.200z" fill="#fff"/><circle cx="0" cy=".6" r="2.700" fill="#0a0a0a"/><circle cx="-.9" cy="-.3" r=".8" fill="#fff"/></g><g transform="translate(1520,260) scale(1.0)"><path d="M-3.200 -.5v-2.500a3.200 3.200 0 0 1 6.400 0v2.500" fill="none" stroke="#a2a2a2" stroke-width="1.500"/><rect x="-5" y="-1" width="10" height="8" fill="#a2a2a2"/></g><rect x="1341.500" y="277.5" width="15" height="7.500" fill="#fff" stroke="#000" stroke-width="1"/><g transform="translate(1498,281) scale(0.95)"><path d="M-8.500 .8C-5-6 5-6 8.500-.2 5 5.500-5 5.500-8.500 .8z" fill="#0a0a0a"/><path d="M-5.500 1.200C-3.200 3.600 3.200 3.600 5.500 .9 3.200-1.800-3.200-1.800-5.500 1.200z" fill="#fff"/><circle cx="0" cy=".6" r="2.700" fill="#0a0a0a"/><circle cx="-.9" cy="-.3" r=".8" fill="#fff"/></g><g transform="translate(1520,280) scale(1.0)"><path d="M-3.200 -.5v-2.500a3.200 3.200 0 0 1 6.400 0v2.500" fill="none" stroke="#a2a2a2" stroke-width="1.500"/><rect x="-5" y="-1" width="10" height="8" fill="#a2a2a2"/></g><rect x="1341.500" y="297.5" width="15" height="7.500" fill="#000" stroke="#000" stroke-width="1"/><g transform="translate(1498,301) scale(0.95)"><path d="M-8.500 .8C-5-6 5-6 8.500-.2 5 5.500-5 5.500-8.500 .8z" fill="#0a0a0a"/><path d="M-5.500 1.200C-3.200 3.600 3.200 3.600 5.500 .9 3.200-1.800-3.200-1.800-5.500 1.200z" fill="#fff"/><circle cx="0" cy=".6" r="2.700" fill="#0a0a0a"/><circle cx="-.9" cy="-.3" r=".8" fill="#fff"/></g><g transform="translate(1520,300) scale(1.0)"><path d="M-3.200 -.5v-2.500a3.200 3.200 0 0 1 6.400 0v2.500" fill="none" stroke="#a2a2a2" stroke-width="1.500"/><rect x="-5" y="-1" width="10" height="8" fill="#a2a2a2"/></g><rect x="1341.500" y="317.5" width="15" height="7.500" fill="#808000" stroke="#000" stroke-width="1"/><g transform="translate(1498,321) scale(0.95)"><path d="M-8.500 .8C-5-6 5-6 8.500-.2 5 5.500-5 5.500-8.500 .8z" fill="#0a0a0a"/><path d="M-5.500 1.200C-3.200 3.600 3.200 3.600 5.500 .9 3.200-1.800-3.200-1.800-5.500 1.200z" fill="#fff"/><circle cx="0" cy=".6" r="2.700" fill="#0a0a0a"/><circle cx="-.9" cy="-.3" r=".8" fill="#fff"/></g><g transform="translate(1520,320) scale(1.0)"><path d="M-3.200 -.5v-2.500a3.200 3.200 0 0 1 6.400 0v2.500" fill="none" stroke="#a2a2a2" stroke-width="1.500"/><rect x="-5" y="-1" width="10" height="8" fill="#a2a2a2"/></g><rect x="1341.500" y="337.5" width="15" height="7.500" fill="#00ffff" stroke="#000" stroke-width="1"/><g transform="translate(1498,341) scale(0.95)"><path d="M-8.500 .8C-5-6 5-6 8.500-.2 5 5.500-5 5.500-8.500 .8z" fill="#0a0a0a"/><path d="M-5.500 1.200C-3.200 3.600 3.200 3.600 5.500 .9 3.200-1.800-3.200-1.800-5.500 1.200z" fill="#fff"/><circle cx="0" cy=".6" r="2.700" fill="#0a0a0a"/><circle cx="-.9" cy="-.3" r=".8" fill="#fff"/></g><g transform="translate(1520,340) scale(1.0)"><path d="M-3.200 -.5v-2.500a3.200 3.200 0 0 1 6.400 0v2.500" fill="none" stroke="#a2a2a2" stroke-width="1.500"/><rect x="-5" y="-1" width="10" height="8" fill="#a2a2a2"/></g><rect x="1341.500" y="357.5" width="15" height="7.500" fill="#008080" stroke="#000" stroke-width="1"/><g transform="translate(1498,361) scale(0.95)"><path d="M-8.500 .8C-5-6 5-6 8.500-.2 5 5.500-5 5.500-8.500 .8z" fill="#0a0a0a"/><path d="M-5.500 1.200C-3.200 3.600 3.200 3.600 5.500 .9 3.200-1.800-3.200-1.800-5.500 1.200z" fill="#fff"/><circle cx="0" cy=".6" r="2.700" fill="#0a0a0a"/><circle cx="-.9" cy="-.3" r=".8" fill="#fff"/></g><g transform="translate(1520,360) scale(1.0)"><path d="M-3.200 -.5v-2.500a3.200 3.200 0 0 1 6.400 0v2.500" fill="none" stroke="#a2a2a2" stroke-width="1.500"/><rect x="-5" y="-1" width="10" height="8" fill="#a2a2a2"/></g><rect x="1341.500" y="377.5" width="15" height="7.500" fill="#aa007f" stroke="#000" stroke-width="1"/><g transform="translate(1498,381) scale(0.95)"><path d="M-8.500 .8C-5-6 5-6 8.500-.2 5 5.500-5 5.500-8.500 .8z" fill="#0a0a0a"/><path d="M-5.500 1.200C-3.200 3.600 3.200 3.600 5.500 .9 3.200-1.800-3.200-1.800-5.500 1.200z" fill="#fff"/><circle cx="0" cy=".6" r="2.700" fill="#0a0a0a"/><circle cx="-.9" cy="-.3" r=".8" fill="#fff"/></g><g transform="translate(1520,380) scale(1.0)"><path d="M-3.200 -.5v-2.500a3.200 3.200 0 0 1 6.400 0v2.500" fill="none" stroke="#a2a2a2" stroke-width="1.500"/><rect x="-5" y="-1" width="10" height="8" fill="#a2a2a2"/></g><rect x="1341.500" y="397.5" width="15" height="7.500" fill="#800080" stroke="#000" stroke-width="1"/><g transform="translate(1498,401) scale(0.95)"><path d="M-8.500 .8C-5-6 5-6 8.500-.2 5 5.500-5 5.500-8.500 .8z" fill="#0a0a0a"/><path d="M-5.500 1.200C-3.200 3.600 3.200 3.600 5.500 .9 3.200-1.800-3.200-1.800-5.500 1.200z" fill="#fff"/><circle cx="0" cy=".6" r="2.700" fill="#0a0a0a"/><circle cx="-.9" cy="-.3" r=".8" fill="#fff"/></g><g transform="translate(1520,400) scale(1.0)"><path d="M-3.200 -.5v-2.500a3.200 3.200 0 0 1 6.400 0v2.500" fill="none" stroke="#a2a2a2" stroke-width="1.500"/><rect x="-5" y="-1" width="10" height="8" fill="#a2a2a2"/></g><rect x="1341.500" y="417.5" width="15" height="7.500" fill="#00ffff" stroke="#000" stroke-width="1"/><g transform="translate(1498,421) scale(0.95)"><path d="M-8.500 .8C-5-6 5-6 8.500-.2 5 5.500-5 5.500-8.500 .8z" fill="#b4b4b4"/><path d="M-5.500 1.200C-3.200 3.600 3.200 3.600 5.500 .9 3.200-1.800-3.200-1.800-5.500 1.200z" fill="#fff"/><circle cx="0" cy=".6" r="2.700" fill="#b4b4b4"/><circle cx="-.9" cy="-.3" r=".8" fill="#fff"/></g><g transform="translate(1520,420) scale(1.0)"><path d="M-3.200 -.5v-2.500a3.200 3.200 0 0 1 6.400 0v2.500" fill="none" stroke="#a2a2a2" stroke-width="1.500"/><rect x="-5" y="-1" width="10" height="8" fill="#a2a2a2"/></g><rect x="1341.500" y="437.5" width="15" height="7.500" fill="#007070" stroke="#000" stroke-width="1"/><g transform="translate(1498,441) scale(0.95)"><path d="M-8.500 .8C-5-6 5-6 8.500-.2 5 5.500-5 5.500-8.500 .8z" fill="#0a0a0a"/><path d="M-5.500 1.200C-3.200 3.600 3.200 3.600 5.500 .9 3.200-1.800-3.200-1.800-5.500 1.200z" fill="#fff"/><circle cx="0" cy=".6" r="2.700" fill="#0a0a0a"/><circle cx="-.9" cy="-.3" r=".8" fill="#fff"/></g><g transform="translate(1520,440) scale(1.0)"><path d="M-3.200 -.5v-2.500a3.200 3.200 0 0 1 6.400 0v2.500" fill="none" stroke="#a2a2a2" stroke-width="1.500"/><rect x="-5" y="-1" width="10" height="8" fill="#a2a2a2"/></g><rect x="1341.500" y="457.5" width="15" height="7.500" fill="#00ffff" stroke="#000" stroke-width="1"/><g transform="translate(1498,461) scale(0.95)"><path d="M-8.500 .8C-5-6 5-6 8.500-.2 5 5.500-5 5.500-8.500 .8z" fill="#0a0a0a"/><path d="M-5.500 1.200C-3.200 3.600 3.200 3.600 5.500 .9 3.200-1.800-3.200-1.800-5.500 1.200z" fill="#fff"/><circle cx="0" cy=".6" r="2.700" fill="#0a0a0a"/><circle cx="-.9" cy="-.3" r=".8" fill="#fff"/></g><g transform="translate(1520,460) scale(1.0)"><path d="M-3.200 -.5v-2.500a3.200 3.200 0 0 1 6.400 0v2.500" fill="none" stroke="#a2a2a2" stroke-width="1.500"/><rect x="-5" y="-1" width="10" height="8" fill="#a2a2a2"/></g><rect x="1341.500" y="477.5" width="15" height="7.500" fill="#000" stroke="#000" stroke-width="1"/><g transform="translate(1498,481) scale(0.95)"><path d="M-8.500 .8C-5-6 5-6 8.500-.2 5 5.500-5 5.500-8.500 .8z" fill="#0a0a0a"/><path d="M-5.500 1.200C-3.200 3.600 3.200 3.600 5.500 .9 3.200-1.800-3.200-1.800-5.500 1.200z" fill="#fff"/><circle cx="0" cy=".6" r="2.700" fill="#0a0a0a"/><circle cx="-.9" cy="-.3" r=".8" fill="#fff"/></g><g transform="translate(1520,480) scale(1.0)"><path d="M-3.200 -.5v-2.500a3.200 3.200 0 0 1 6.400 0v2.500" fill="none" stroke="#a2a2a2" stroke-width="1.500"/><rect x="-5" y="-1" width="10" height="8" fill="#a2a2a2"/></g><rect x="1341.500" y="497.5" width="15" height="7.500" fill="#000" stroke="#000" stroke-width="1"/><g transform="translate(1498,501) scale(0.95)"><path d="M-8.500 .8C-5-6 5-6 8.500-.2 5 5.500-5 5.500-8.500 .8z" fill="#0a0a0a"/><path d="M-5.500 1.200C-3.200 3.600 3.200 3.600 5.500 .9 3.200-1.800-3.200-1.800-5.500 1.200z" fill="#fff"/><circle cx="0" cy=".6" r="2.700" fill="#0a0a0a"/><circle cx="-.9" cy="-.3" r=".8" fill="#fff"/></g><g transform="translate(1520,500) scale(1.0)"><path d="M-3.200 -.5v-2.500a3.200 3.200 0 0 1 6.400 0v2.500" fill="none" stroke="#a2a2a2" stroke-width="1.500"/><rect x="-5" y="-1" width="10" height="8" fill="#a2a2a2"/></g><rect x="1341.500" y="517.5" width="15" height="7.500" fill="#000" stroke="#000" stroke-width="1"/><g transform="translate(1498,521) scale(0.95)"><path d="M-8.500 .8C-5-6 5-6 8.500-.2 5 5.500-5 5.500-8.500 .8z" fill="#0a0a0a"/><path d="M-5.500 1.200C-3.200 3.600 3.200 3.600 5.500 .9 3.200-1.800-3.200-1.800-5.500 1.200z" fill="#fff"/><circle cx="0" cy=".6" r="2.700" fill="#0a0a0a"/><circle cx="-.9" cy="-.3" r=".8" fill="#fff"/></g><g transform="translate(1520,520) scale(1.0)"><path d="M-3.200 -.5v-2.500a3.200 3.200 0 0 1 6.400 0v2.500" fill="none" stroke="#a2a2a2" stroke-width="1.500"/><rect x="-5" y="-1" width="10" height="8" fill="#a2a2a2"/></g><rect x="1341.500" y="537.5" width="15" height="7.500" fill="#808000" stroke="#000" stroke-width="1"/><g transform="translate(1498,541) scale(0.95)"><path d="M-8.500 .8C-5-6 5-6 8.500-.2 5 5.500-5 5.500-8.500 .8z" fill="#0a0a0a"/><path d="M-5.500 1.200C-3.200 3.600 3.200 3.600 5.500 .9 3.200-1.800-3.200-1.800-5.500 1.200z" fill="#fff"/><circle cx="0" cy=".6" r="2.700" fill="#0a0a0a"/><circle cx="-.9" cy="-.3" r=".8" fill="#fff"/></g><g transform="translate(1520,540) scale(1.0)"><path d="M-3.200 -.5v-2.500a3.200 3.200 0 0 1 6.400 0v2.500" fill="none" stroke="#a2a2a2" stroke-width="1.500"/><rect x="-5" y="-1" width="10" height="8" fill="#a2a2a2"/></g><rect x="1341.500" y="557.5" width="15" height="7.500" fill="#ff0000" stroke="#000" stroke-width="1"/><g transform="translate(1498,561) scale(0.95)"><path d="M-8.500 .8C-5-6 5-6 8.500-.2 5 5.500-5 5.500-8.500 .8z" fill="#b4b4b4"/><path d="M-5.500 1.200C-3.200 3.600 3.200 3.600 5.500 .9 3.200-1.800-3.200-1.800-5.500 1.200z" fill="#fff"/><circle cx="0" cy=".6" r="2.700" fill="#b4b4b4"/><circle cx="-.9" cy="-.3" r=".8" fill="#fff"/></g><g transform="translate(1520,560) scale(1.0)"><path d="M-3.200 -.5v-2.500a3.200 3.200 0 0 1 6.400 0v2.500" fill="none" stroke="#a2a2a2" stroke-width="1.500"/><rect x="-5" y="-1" width="10" height="8" fill="#a2a2a2"/></g></svg><div class="t" style="left:1363.5px;top:192.5px;font-size:15px;line-height:18px;color:#000;letter-spacing:-0.844px;">0</div><div class="t" style="left:1363.5px;top:212.5px;font-size:15px;line-height:18px;color:#000;letter-spacing:-0.146px;">Angles</div><div class="t" style="left:1363.5px;top:232.5px;font-size:15px;line-height:18px;color:#000;letter-spacing:-0.465px;">Axes</div><div class="t" style="left:1363.5px;top:252.5px;font-size:15px;line-height:18px;color:#000;letter-spacing:0.007px;">Bield&#x27;excent</div><div class="t" style="left:1363.5px;top:272.5px;font-size:15px;line-height:18px;color:#000;letter-spacing:0.236px;">Defpoints</div><div class="t" style="left:1363.5px;top:292.5px;font-size:15px;line-height:18px;color:#000;letter-spacing:-0.286px;">Hachaxe</div><div class="t" style="left:1363.5px;top:312.5px;font-size:15px;line-height:18px;color:#000;letter-spacing:0.016px;">Hachbiel</div><div class="t" style="left:1363.5px;top:332.5px;font-size:15px;line-height:18px;color:#000;letter-spacing:-0.172px;">Hachexcent</div><div class="t" style="left:1363.5px;top:352.5px;font-size:15px;line-height:18px;color:#000;letter-spacing:0.045px;">Hachvolant</div><div class="t" style="left:1363.5px;top:372.5px;font-size:15px;line-height:18px;color:#000;letter-spacing:-0.310px;">Palier</div><div class="t" style="left:1363.5px;top:392.5px;font-size:15px;line-height:18px;color:#000;letter-spacing:-0.372px;">Paliercaché</div><div class="t" style="left:1363.5px;top:412.5px;font-size:15px;line-height:18px;color:#000;letter-spacing:0.198px;">Villebrequin</div><div class="t" style="left:1363.5px;top:432.5px;font-size:15px;line-height:18px;color:#000;letter-spacing:0.130px;">Volant</div><div class="t" style="left:1363.5px;top:452.5px;font-size:15px;line-height:18px;color:#000;letter-spacing:-0.112px;">Volantcaché</div><div class="t" style="left:1363.5px;top:472.5px;font-size:15px;line-height:18px;color:#000;letter-spacing:-0.729px;">axe</div><div class="t" style="left:1363.5px;top:492.5px;font-size:15px;line-height:18px;color:#000;letter-spacing:-0.515px;">axecaché</div><div class="t" style="left:1363.5px;top:512.5px;font-size:15px;line-height:18px;color:#000;letter-spacing:-0.215px;">axemoyeu</div><div class="t" style="left:1363.5px;top:532.5px;font-size:15px;line-height:18px;color:#000;letter-spacing:0.353px;">bordbiel</div><div class="t" style="left:1363.5px;top:552.5px;font-size:15px;line-height:18px;color:#000;letter-spacing:-0.359px;">camcache</div><div class="b" style="left:1531px;top:192px;width:20px;height:380px;background:#f7f7f7;"></div><div class="btn" style="left:1531px;top:192px;width:20px;height:20px"></div><div class="btn" style="left:1531px;top:212px;width:20px;height:247px"></div><div class="btn" style="left:1531px;top:552px;width:20px;height:20px"></div><svg style="left:0;top:0" width="1600" height="900"><path d="M1537 205h8l-4-5zM1537 559h8l-4 5z" fill="#000"/></svg><div class="t" style="left:1338px;top:585.5px;font-size:13px;line-height:16px;color:#000;letter-spacing:-0.047px;">Filtre de sélection</div><svg style="left:1523px;top:586px" width="11" height="11"><path d="M3.500 1.500h6v5h-6zM3.500 2.500h6M1.500 4.500h5v5h-5zM1.500 5.500h5" fill="#f0f0f0" stroke="#000" stroke-width="1"/></svg><svg style="left:1540px;top:587px" width="10" height="10"><path d="M1 1l8 8M9 1l-8 8" stroke="#000" stroke-width="1.600"/></svg><div class="b" style="left:1336px;top:603px;width:218px;height:2px;border-top:1px solid #a0a0a0;border-bottom:1px solid #fff;"></div><div class="b" style="left:1554px;top:582px;width:1px;height:223px;background:#fff;"></div><div class="b" style="left:1347px;top:623px;width:195px;height:136px;border:1px solid #a0a0a0;box-shadow:1px 1px 0 #fff, inset 1px 1px 0 #fff;"></div><div class="b" style="left:1355px;top:616px;width:33px;height:14px;background:#f0f0f0;"></div><div class="t" style="left:1357.5px;top:615.5px;font-size:13px;line-height:16px;color:#000;letter-spacing:-0.065px;">Filtre</div><div class="t" style="left:1360px;top:647.5px;font-size:13px;line-height:16px;color:#000;letter-spacing:0.096px;">Type :</div><div class="t" style="left:1360px;top:676.5px;font-size:13px;line-height:16px;color:#000;letter-spacing:0.001px;">Propriété :</div><div class="t" style="left:1360px;top:705.5px;font-size:13px;line-height:16px;color:#000;letter-spacing:-0.081px;">Comparaison :</div><div class="t" style="left:1360px;top:731.5px;font-size:13px;line-height:16px;color:#000;letter-spacing:0.020px;">Valeur :</div><div class="b" style="left:1451px;top:645px;width:78px;height:21px;background:#fff;border:1px solid;border-color:#828282 #fff #fff #828282;box-shadow:inset 1px 1px 0 #696969, inset -1px -1px 0 #e3e3e3;"></div><div class="btn" style="left:1511px;top:647px;width:16px;height:17px"></div><svg style="left:1515px;top:653px" width="8" height="5"><path d="M0 0h8L4 4.500z" fill="#000"/></svg><div class="b" style="left:1451px;top:674px;width:78px;height:21px;background:#fff;border:1px solid;border-color:#828282 #fff #fff #828282;box-shadow:inset 1px 1px 0 #696969, inset -1px -1px 0 #e3e3e3;"></div><div class="btn" style="left:1511px;top:676px;width:16px;height:17px"></div><svg style="left:1515px;top:682px" width="8" height="5"><path d="M0 0h8L4 4.500z" fill="#000"/></svg><div class="b" style="left:1451px;top:703px;width:78px;height:21px;background:#fff;border:1px solid;border-color:#828282 #fff #fff #828282;box-shadow:inset 1px 1px 0 #696969, inset -1px -1px 0 #e3e3e3;"></div><div class="btn" style="left:1511px;top:705px;width:16px;height:17px"></div><svg style="left:1515px;top:711px" width="8" height="5"><path d="M0 0h8L4 4.500z" fill="#000"/></svg><div class="t" style="left:1455.5px;top:647.5px;font-size:13px;line-height:16px;color:#000;letter-spacing:-0.242px;">Tous</div><div class="btn" style="left:1347px;top:767px;width:49px;height:26px"></div><div class="btn" style="left:1396px;top:767px;width:49px;height:26px"></div><div class="btn" style="left:1445px;top:767px;width:49px;height:26px"></div><div class="btn" style="left:1494px;top:767px;width:49px;height:26px"></div><svg style="left:0;top:0" width="1600" height="900"><rect x="1363.500" y="772.500" width="15" height="15" fill="#ff9a9a" stroke="#a05050" stroke-width="1" stroke-dasharray="2 1.500"/><rect x="1412.500" y="772.500" width="12" height="12" fill="#ff9a9a" stroke="#904848"/><rect x="1416.500" y="776.500" width="12" height="12" fill="#ff9a9a" fill-opacity=".8" stroke="#904848" stroke-dasharray="2 1.500"/><rect x="1461.500" y="772.500" width="12" height="12" fill="#ff9a9a" stroke="#c07070"/><rect x="1465.500" y="776.500" width="12" height="12" fill="#fff" stroke="#666" stroke-dasharray="2 1.500"/><rect x="1510.500" y="772.500" width="12" height="12" fill="#fff" stroke="#888"/><rect x="1514.500" y="776.500" width="12" height="12" fill="#fff" stroke="#666" stroke-dasharray="2 1.500"/><rect x="1515" y="777" width="7.500" height="7.500" fill="#ff9a9a"/></svg><div class="b" style="left:1560px;top:147px;width:32px;height:2px;border-top:1px solid #fff;border-bottom:1px solid #a0a0a0;"></div><div class="b" style="left:1560px;top:150px;width:32px;height:2px;border-top:1px solid #fff;border-bottom:1px solid #a0a0a0;"></div><div class="b" style="left:1559px;top:267px;width:33px;height:2px;border-top:1px solid #a0a0a0;border-bottom:1px solid #fff;"></div><div class="b" style="left:1559px;top:381px;width:33px;height:2px;border-top:1px solid #a0a0a0;border-bottom:1px solid #fff;"></div><div class="b" style="left:1557px;top:157px;width:36px;height:34px;background:#f8f8f8;border:1px solid;border-color:#a0a0a0 #fff #fff #a0a0a0;"></div><div class="b" style="left:1557px;top:308px;width:36px;height:34px;background:#f8f8f8;border:1px solid;border-color:#a0a0a0 #fff #fff #a0a0a0;"></div><svg style="left:0;top:0" width="1600" height="900"><g transform="translate(1561,161)"><rect x=".5" y=".5" width="26" height="25" fill="#fff" stroke="#555" stroke-width="1"/><rect x="1" y="1" width="25" height="4" fill="#000"/><rect x="1.500" y="1.500" width="3" height="3" fill="#fff"/><path d="M8 11l8-3v11l-8 3z" fill="#999" stroke="#666" stroke-width=".6"/><path d="M11 10.500l8-3v11l-8 3z" fill="#fff" stroke="#666" stroke-width=".6"/><path d="M14 10l8-3v11l-8 3z" fill="#fdd" stroke="#c33" stroke-width=".8"/><path d="M15.500 17.500l4-6v5z" fill="none" stroke="#e33" stroke-width=".8"/></g><g transform="translate(1561,196)"><rect x=".5" y=".5" width="26" height="25" fill="#fff" stroke="#555" stroke-width="1"/><rect x="1" y="1" width="25" height="4" fill="#000"/><rect x="1.500" y="1.500" width="3" height="3" fill="#fff"/><rect x="6.500" y="9.500" width="10" height="8" fill="#f4e8c0" stroke="#998" stroke-width=".8"/><circle cx="16" cy="16.500" r="4.500" fill="#f4e8c0" fill-opacity=".7" stroke="#998" stroke-width=".8"/></g><g transform="translate(1561,232)"><rect x=".5" y=".5" width="26" height="25" fill="#fff" stroke="#555" stroke-width="1"/><rect x="1" y="1" width="25" height="4" fill="#000"/><rect x="1.500" y="1.500" width="3" height="3" fill="#fff"/><rect x="5.500" y="10.500" width="16" height="10" fill="#f4f2e6" stroke="#9ab0d8" stroke-width="1"/></g><g transform="translate(1561,275)"><rect x=".5" y=".5" width="26" height="25" fill="#fff" stroke="#555" stroke-width="1"/><rect x="1" y="1" width="25" height="4" fill="#000"/><rect x="1.500" y="1.500" width="3" height="3" fill="#fff"/><path d="M4 9h4v3H4zM4 14h4v3H4zM4 19h4v3H4z" fill="#000"/><path d="M10.500 9.500h12v2h-12zM10.500 14.500h12v2h-12zM10.500 19.500h12v2h-12z" fill="#fff" stroke="#555" stroke-width=".8"/></g><g transform="translate(1561,312)"><rect x=".5" y=".5" width="26" height="25" fill="#fff" stroke="#555" stroke-width="1"/><rect x="1" y="1" width="25" height="4" fill="#000"/><rect x="1.500" y="1.500" width="3" height="3" fill="#fff"/><path d="M6 8.500h15l-5.500 7v7l-4-2v-5z" fill="#8a8a8a" stroke="#333" stroke-width=".8"/></g><g transform="translate(1561,347)"><rect x=".5" y=".5" width="26" height="25" fill="#fff" stroke="#555" stroke-width="1"/><rect x="1" y="1" width="25" height="4" fill="#000"/><rect x="1.500" y="1.500" width="3" height="3" fill="#fff"/><path d="M6 10h3v10H6zM9 12h9l3 2v3l-3 2H9z" fill="#ddd" stroke="#555" stroke-width=".7"/><path d="M3 15.500h22M10.500 9v13" stroke="#e55" stroke-width=".7"/></g><g transform="translate(1561,389)"><rect x=".5" y=".5" width="26" height="25" fill="#fff" stroke="#555" stroke-width="1"/><rect x="1" y="1" width="25" height="4" fill="#000"/><rect x="1.500" y="1.500" width="3" height="3" fill="#fff"/><path d="M3 9.500h12M3 12.500h11M3 15.500h14M3 18.500h14" stroke="#666" stroke-width="1" stroke-dasharray="2 .6"/><rect x="1.500" y="21.500" width="24" height="3.500" fill="#ddd" stroke="#777" stroke-width=".5"/></g><g transform="translate(1561,426)"><rect x=".5" y=".5" width="26" height="25" fill="#fff" stroke="#555" stroke-width="1"/><rect x="1" y="1" width="25" height="4" fill="#000"/><rect x="1.500" y="1.500" width="3" height="3" fill="#fff"/><rect x="7.500" y="9.500" width="12" height="13" rx="1" fill="#c9963c" stroke="#85601c" stroke-width=".8"/><rect x="9.500" y="11.500" width="8" height="9.500" fill="#f4f0e6"/><rect x="11" y="8" width="5" height="3" fill="#999" stroke="#666" stroke-width=".5"/></g></svg><div class="b" style="left:1px;top:806px;width:1575px;height:1px;background:#a0a0a0;"></div><div class="b" style="left:1575px;top:806px;width:1px;height:42px;background:#fff;"></div><div class="b" style="left:1555px;top:803px;width:40px;height:1px;background:#a0a0a0;"></div><div class="b" style="left:1px;top:847px;width:1594px;height:2px;background:#fff;"></div><div class="b" style="left:269px;top:807px;width:1px;height:40px;background:#a0a0a0;"></div><div class="t" style="left:4px;top:808.5px;font-size:14px;line-height:17px;color:#000;letter-spacing:-0.106px;">-60.8,68.1</div><div class="t" style="left:4px;top:828.5px;font-size:14px;line-height:17px;color:#000;letter-spacing:-0.115px;">@-60.8,68.1</div><div class="t" style="left:273px;top:808.5px;font-size:14px;line-height:17px;color:#000;letter-spacing:0.180px;">91.3&lt;131.78°</div><div class="t" style="left:273px;top:828.5px;font-size:14px;line-height:17px;color:#000;letter-spacing:0.149px;">@91.3&lt;131.78°</div><div class="t" style="left:1000px;top:818.5px;font-size:14.5px;line-height:17px;color:#000;letter-spacing:0.058px;">Aucune des entités sélectionnées.</div><svg style="left:740px;top:806px" width="60" height="42"><defs><radialGradient id="gms" cx=".4" cy=".45" r=".65"><stop offset="0" stop-color="#fff"/><stop offset=".6" stop-color="#f8f8f8"/><stop offset=".85" stop-color="#d4d4d4"/><stop offset="1" stop-color="#b4b4b4"/></radialGradient><linearGradient id="gmt" x1="0" y1="0" x2="1" y2="1"><stop offset="0" stop-color="#f4f4f4"/><stop offset="1" stop-color="#d0d0d0"/></linearGradient></defs><path d="M22.500 6l1.800 3" stroke="#666" stroke-width="1.400"/><path d="M17.500 12C19 8.500 26 7.500 30 8.500C35 11 41 21 41.500 27C42 33 34 37 28 35.500C21 34 16 24 16.500 17C16.500 15 17 13.500 17.500 12Z" fill="url(#gms)" stroke="#8c8c8c" stroke-width=".8"/><ellipse cx="26.500" cy="14" rx="7.500" ry="4.800" transform="rotate(8 26.500 14)" fill="url(#gmt)" opacity=".9"/><ellipse cx="27" cy="15.400" rx="1.800" ry="3.500" transform="rotate(-22 27 15.400)" fill="#4a68d8"/></svg><svg style="left:1582px;top:836px" width="12" height="12"><path d="M12 0L0 12M12 4L4 12M12 8L8 12" stroke="#a0a0a0" stroke-width="1.500"/><path d="M12 1.500L1.500 12M12 5.500L5.500 12M12 9.500L9.500 12" stroke="#fff" stroke-width=".8"/></svg><div class="b" style="left:0px;top:850px;width:1600px;height:50px;background:radial-gradient(ellipse 120px 40px at 600px 30px,#1c2114 0,rgba(28,33,20,0) 100%),radial-gradient(ellipse 160px 40px at 1250px 20px,#181c12 0,rgba(24,28,18,0) 100%),linear-gradient(90deg,#161a10 0,#14180e 20%,#11130c 40%,#0b0c08 55%,#0d0f0a 70%,#11140c 85%,#0c0e09 100%);"></div><div class="b" style="left:0px;top:850px;width:60px;height:50px;background:#181d10;"></div><div class="b" style="left:60px;top:850px;width:430px;height:50px;background:#353535;"></div><div class="b" style="left:925px;top:850px;width:61px;height:50px;background:#46463f;"></div><div class="t" style="left:75px;top:864.5px;font-size:18px;line-height:22px;color:#a4a4a4;letter-spacing:-0.274px;">Rechercher sur le web et dans Windows</div><div class="b" style="left:620px;top:897px;width:51px;height:3px;background:#f8f0b8;"></div><div class="b" style="left:925px;top:897px;width:61px;height:3px;background:#f8f0b8;"></div><div class="b" style="left:993px;top:897px;width:50px;height:3px;background:#f8f0b8;"></div><div class="b" style="left:1054px;top:897px;width:41px;height:3px;background:#f8f0b8;"></div><div class="b" style="left:1117px;top:897px;width:50px;height:3px;background:#f8f0b8;"></div><div class="b" style="left:1095px;top:897px;width:8px;height:3px;background:#c8c094;"></div><div class="b" style="left:1595px;top:850px;width:1px;height:50px;background:#555;"></div><svg style="left:0;top:0" width="1600" height="900"><path d="M20 868.200l8.200-1.200v8H20zM29.200 866.800L40 865.200V875H29.200zM20 876h8.200v8L20 882.800zM29.200 876H40v9.800l-10.800-1.600z" fill="#fff"/><rect x="511.500" y="867.500" width="17" height="15" fill="none" stroke="#fff" stroke-width="1.400"/><path d="M509.500 869.500h-2.500v11h2.500M530.500 869.500h2.500v11h-2.500" fill="none" stroke="#fff" stroke-width="1.200"/><path d="M571 873c1-7 6.500-11 12.500-11 7.500 0 11.500 5.500 11.500 12v2.500h-15.500c.5 4 3.500 6 7.500 6 2.800 0 5-.7 7-1.800v4.800c-2.300 1.300-5 2-8.500 2-7 0-11.800-4.300-11.800-11 0-4.500 2.300-8 6-10-1.500 1.500-2.300 3.300-2.600 5h10.400c0-3-1.800-5-5-5-4.500 0-8.500 2.500-11.500 6.500z" fill="#1b7fe0"/><path d="M631 864h9l2 2h15v4h-26z" fill="#f4c64a"/><rect x="631" y="868" width="26" height="17" fill="#fbd968"/><path d="M636 885v-9h16v9h-4v-5h-8v5z" fill="#2ba8e8"/><rect x="636" y="874" width="16" height="3" fill="#58c4f4"/><circle cx="706" cy="875" r="13" fill="#e33b2e"/><path d="M706 875l-11.260 6.500A13 13 0 0 0 706 888l6.500-11.260z" fill="#2da94f"/><path d="M706 875h13a13 13 0 0 1-13 13z" fill="#fdd23e" transform="rotate(-30 706 875)"/><path d="M706 875L694.740 868.500A13 13 0 0 0 694.740 881.500z" fill="#2da94f"/><path d="M706 875l6.500 11.260A13 13 0 0 0 717.260 868.500H706z" fill="#fdd23e"/><path d="M706 862a13 13 0 0 1 11.260 6.500H706a6.500 6.500 0 0 0-5.630 3.250L694.740 868.500A13 13 0 0 1 706 862z" fill="#e33b2e"/><circle cx="706" cy="875" r="6.200" fill="#fff"/><circle cx="706" cy="875" r="5" fill="#4a8af4"/><rect x="766" y="864" width="16" height="22" fill="#fff" stroke="#2b579a" stroke-width="1"/><path d="M772 868h8M772 871.500h8M772 875h8M772 878.500h8M772 882h8" stroke="#2b579a" stroke-width="1.500"/><path d="M754 864.500l17-3v27l-17-3z" fill="#2b579a"/><text x="762.5" y="880.500" font-family="'Liberation Sans',sans-serif" font-weight="700" font-size="14" fill="#fff" text-anchor="middle">W</text><rect x="828" y="864" width="16" height="22" fill="#fff" stroke="#217346" stroke-width="1"/><path d="M834 868h8M834 871.500h8M834 875h8M834 878.500h8M834 882h8" stroke="#217346" stroke-width="1.500"/><path d="M816 864.500l17-3v27l-17-3z" fill="#217346"/><text x="824.5" y="880.500" font-family="'Liberation Sans',sans-serif" font-weight="700" font-size="14" fill="#fff" text-anchor="middle">X</text><rect x="890" y="864" width="16" height="22" fill="#fff" stroke="#d24726" stroke-width="1"/><path d="M896 868h8M896 871.500h8M896 875h8M896 878.500h8M896 882h8" stroke="#d24726" stroke-width="1.500"/><path d="M878 864.500l17-3v27l-17-3z" fill="#d24726"/><text x="886.5" y="880.500" font-family="'Liberation Sans',sans-serif" font-weight="700" font-size="14" fill="#fff" text-anchor="middle">P</text><g transform="translate(953.5,874.5) scale(1.22)"><circle cx="0" cy="0" r="8.500" fill="#d4d4d8" stroke="url(#gq)" stroke-width="3.400"/><path d="M-6.500 0h6.500M-1.500 -5.500l3 5.500M2 -5l-2.500 5" stroke="#888" stroke-width=".8"/><path d="M-6 3.500h6M2 -6l-2 5" stroke="#e04848" stroke-width=".8" stroke-dasharray="1.500 1"/><g transform="translate(.5 1.200) scale(.82 .84) translate(-.5 -1.200)"><path d="M.5 1.200l2.200-2.200 8 7.300-2.600 2.700z" fill="#f5a81c"/><path d="M.5 1.200l2.200-2.200 .8.700-2.400 2.300z" fill="#f6e08a"/><path d="M1.300 1.900l1.100-1 7.600 7-1 1.100z" fill="#fbd24a"/><path d="M8.100 9l2.600-2.700 2 1.800-2.600 2.700z" fill="#e8707a"/><path d="M.5 1.200l.9-.9-.1 1z" fill="#444"/></g></g><path d="M1003 869l5-2v16l-5 2z" fill="#c8c8c8" stroke="#999" stroke-width=".6"/><path d="M1009 864.500l19-2.500v17l-19 2z" fill="#f4f8fc" stroke="#b8b8b8" stroke-width="1.400"/><path d="M1011 877l3-1 2-7 2 8 2-2 2 1 2-6 2 6" fill="none" stroke="#3a8ad8" stroke-width="1"/><path d="M1016 882h6v4h-6z" fill="#bbb"/><ellipse cx="1019" cy="887" rx="7" ry="2.200" fill="#ddd" stroke="#aaa" stroke-width=".5"/><path d="M1066 875c.5-7 5.500-11.500 12-11.500 7.500 0 11.500 5.500 11.500 12v2h-16c.7 3.500 3.200 5.500 7.200 5.500 3 0 5.300-1 7.300-2.500v5c-2.300 1.500-5 2.300-8.500 2.300-7.500 0-13.500-5-13.500-12.800zm6.500-1.800h10.500c0-3.200-2-5.200-5-5.200s-5 2-5.500 5.200z" fill="#2ab4f0"/><path d="M1090 863c2.500-2.500 3-5 .5-5.500-5-1-18 7-24 18-3.500 6.500-3.500 10-1 10.500 1.500.3 4-.5 6-2" fill="none" stroke="#f4bc18" stroke-width="2"/><path d="M1128 866.500l4.300-.7v4.300h-4.300zM1133.300 865.700l5.200-.8v5.200h-5.200zM1128 871h4.300v4.300l-4.300-.6zM1133.300 871h5.200v5.300l-5.200-.8z" fill="#18b4f0"/><path d="M1127 881l15-6 12 3.500v5.500l-14 5-13-2.500z" fill="#e4e4e4" stroke="#bbb" stroke-width=".5"/><path d="M1127 881l13 2.500v5.500l-13-2.500z" fill="#9a9a9a"/><path d="M1140 883.500l14-5v5.500l-14 5z" fill="#c4c4c4"/><rect x="1136" y="884.500" width="2" height="1.500" fill="#3c3"/><path d="M1336.500 879l7.500-7.500 7.500 7.500" fill="none" stroke="#fff" stroke-width="1.500"/><rect x="1366.500" y="866.500" width="14" height="15" fill="#555" stroke="#aaa" stroke-width="1"/><path d="M1369.500 867v14M1372.500 867v14M1375.500 867v14M1378.500 867v14M1367 869.500h13M1367 872.500h13M1367 875.500h13M1367 878.500h13" stroke="#bbb" stroke-width=".7"/><path d="M1366 881.200h15" stroke="#38a8f0" stroke-width="1.600"/><rect x="1399.500" y="870.500" width="13" height="9" fill="none" stroke="#fff" stroke-width="1.300"/><rect x="1413" y="873" width="1.500" height="4" fill="#fff"/><rect x="1401" y="872" width="6" height="6" fill="#fff"/><path d="M1395 869v3M1398 869v3M1394 872h5v2.500c0 1.500-1 2-2.500 2v4" fill="none" stroke="#fff" stroke-width="1.200"/><path d="M1427.500 882a14.500 14.500 0 0 1 14.500-14.500M1431.500 882a10.500 10.500 0 0 1 10.500-10.500M1435.500 882a6.500 6.500 0 0 1 6.500-6.500" fill="none" stroke="#fff" stroke-width="1.300"/><rect x="1439" y="879" width="3.200" height="3.200" fill="#fff"/><path d="M1454.500 872.500h3.500l4-4v13l-4-4h-3.500z" fill="none" stroke="#fff" stroke-width="1.200"/><path d="M1465 871.500a5 5 0 0 1 0 7M1468 869a9 9 0 0 1 0 12M1471 866.500a13 13 0 0 1 0 17" fill="none" stroke="#fff" stroke-width="1.200"/><path d="M1484 865h20v17h-8l-2.500 3-2.500-3h-7z" fill="#fff"/><path d="M1488 869.500h12M1488 873.500h12M1488 877.500h8" stroke="#222" stroke-width="1.200"/></svg><div class="t" style="left:1538px;top:855.5px;font-size:13.5px;line-height:16px;color:#fff;letter-spacing:0.180px;">8:59</div><div class="t" style="left:1521px;top:876.5px;font-size:13.5px;line-height:16px;color:#fff;letter-spacing:1.055px;">01/11/15</div></div></body></html>
